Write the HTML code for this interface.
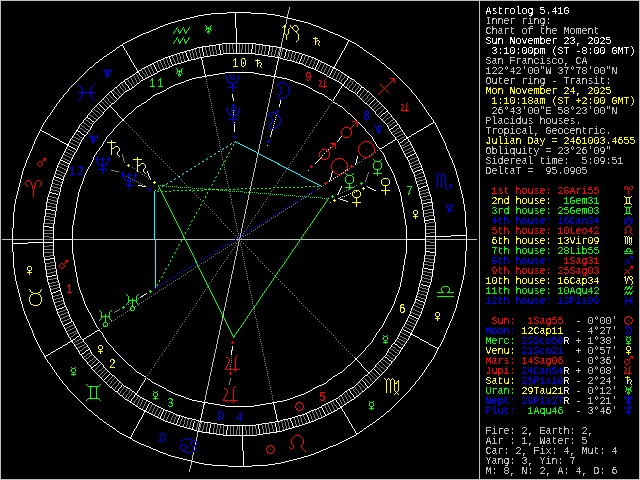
<!DOCTYPE html>
<html><head><meta charset="utf-8"><title>Astrolog 5.41G</title><style>
html,body{margin:0;padding:0;background:#000;}
body{width:640px;height:480px;position:relative;overflow:hidden;}
svg{position:absolute;left:0;top:0;}
.t{position:absolute;left:0;top:0;width:640px;height:480px;filter:url(#crisp);}
.l,.h{position:absolute;white-space:pre;font-family:"Liberation Mono",monospace;font-size:10px;line-height:10px;height:10px;}
.h{font-size:13.333px;line-height:13px;height:13px;letter-spacing:1.6px;transform:scaleX(0.8333);transform-origin:0 0;}
.l{left:485.5px;}
</style></head>
<body>
<svg width="640" height="480" viewBox="0 0 640 480" shape-rendering="crispEdges">
<rect width="640" height="480" fill="#000"/>
<path fill="#c0c0c0" d="M0 0h640v1h-640zM0 479h640v1h-640zM0 1h1v478h-1zM479 1h1v478h-1zM639 1h1v478h-1zM289 7h1v3h-1zM288 10h1v4h-1zM287 14h1v3h-1zM287 18h1v1h-1zM286 19h1v5h-1zM285 24h1v4h-1zM283 33h1v5h-1zM282 38h1v4h-1zM281 42h1v5h-1zM280 48h1v4h-1zM279 52h1v4h-1zM278 56h1v1h-1zM275 74h1v1h-1zM274 77h1v2h-1zM273 79h1v5h-1zM272 84h1v5h-1zM271 89h1v4h-1zM270 93h1v5h-1zM269 98h1v5h-1zM268 103h1v4h-1zM267 107h1v5h-1zM266 112h1v5h-1zM265 117h1v4h-1zM264 121h1v5h-1zM263 126h1v4h-1zM262 130h1v5h-1zM261 135h1v5h-1zM260 140h1v4h-1zM259 144h1v5h-1zM258 149h1v4h-1zM257 154h1v4h-1zM256 158h1v5h-1zM255 163h1v5h-1zM254 168h1v4h-1zM253 172h1v5h-1zM252 177h1v4h-1zM251 181h1v5h-1zM250 186h1v2h-1zM250 189h1v2h-1zM249 191h1v4h-1zM248 195h1v5h-1zM247 200h1v5h-1zM246 205h1v4h-1zM245 209h1v5h-1zM244 214h1v5h-1zM243 219h1v4h-1zM242 223h1v5h-1zM241 228h1v5h-1zM240 233h1v4h-1zM239 238h1v1h-1zM239 240h1v1h-1zM2 239h10v1h-10zM13 239h30v1h-30zM73 239h81v1h-81zM155 239h30v1h-30zM186 239h49v1h-49zM236 239h3v1h-3zM240 239h60v1h-60zM301 239h105v1h-105zM436 239h30v1h-30zM467 239h10v1h-10zM238 242h1v4h-1zM237 246h1v5h-1zM236 251h1v5h-1zM235 256h1v4h-1zM234 260h1v5h-1zM233 265h1v5h-1zM232 270h1v4h-1zM231 274h1v5h-1zM230 279h1v5h-1zM229 284h1v4h-1zM228 288h1v5h-1zM227 293h1v4h-1zM226 297h1v5h-1zM225 302h1v5h-1zM224 307h1v4h-1zM223 311h1v5h-1zM222 316h1v5h-1zM221 321h1v4h-1zM220 325h1v5h-1zM219 330h1v5h-1zM218 335h1v4h-1zM217 339h1v5h-1zM216 344h1v5h-1zM215 349h1v4h-1zM214 353h1v5h-1zM213 358h1v4h-1zM212 362h1v5h-1zM211 367h1v5h-1zM210 372h1v4h-1zM209 376h1v5h-1zM208 381h1v5h-1zM207 386h1v4h-1zM206 390h1v5h-1zM205 395h1v5h-1zM204 400h1v2h-1zM203 404h1v1h-1zM201 413h1v1h-1zM200 422h1v1h-1zM199 423h1v4h-1zM198 427h1v4h-1zM197 432h1v5h-1zM196 437h1v4h-1zM195 442h1v3h-1zM194 447h1v3h-1zM193 452h1v3h-1zM192 455h1v5h-1zM191 460h1v1h-1zM191 462h1v3h-1zM190 465h1v4h-1zM189 469h1v3h-1z"/><path fill="#ffffff" d="M227 12h24v1h-24zM211 13h16v1h-16zM235 13h1v15h-1zM251 13h16v1h-16zM204 14h7v1h-7zM204 422h7v1h-7zM267 14h8v1h-8zM198 15h6v1h-6zM275 15h5v1h-5zM275 57h5v1h-5zM275 421h5v1h-5zM194 16h4v1h-4zM280 16h4v1h-4zM190 17h4v1h-4zM284 17h4v1h-4zM186 18h4v1h-4zM288 18h4v1h-4zM288 50h4v1h-4zM288 418h4v1h-4zM288 428h4v1h-4zM182 19h4v1h-4zM292 19h4v1h-4zM178 20h4v1h-4zM296 20h4v1h-4zM175 21h3v1h-3zM175 84h3v1h-3zM175 394h3v1h-3zM300 21h4v1h-4zM171 22h4v1h-4zM171 456h4v1h-4zM304 22h4v1h-4zM304 456h4v1h-4zM168 23h3v1h-3zM168 56h3v1h-3zM168 411h3v1h-3zM168 422h3v1h-3zM168 455h3v1h-3zM308 23h3v1h-3zM308 56h3v1h-3zM308 67h3v1h-3zM308 422h3v1h-3zM308 455h3v1h-3zM165 24h3v1h-3zM165 57h3v1h-3zM165 68h3v1h-3zM165 410h3v1h-3zM165 421h3v1h-3zM311 24h2v1h-2zM163 25h2v1h-2zM163 58h2v1h-2zM163 409h2v1h-2zM163 420h2v1h-2zM313 25h3v1h-3zM160 26h3v1h-3zM160 452h3v1h-3zM316 26h3v1h-3zM316 452h3v1h-3zM158 27h2v1h-2zM158 385h2v1h-2zM158 451h2v1h-2zM319 27h2v1h-2zM319 451h2v1h-2zM156 28h2v1h-2zM156 61h2v1h-2zM156 384h2v1h-2zM156 450h2v1h-2zM236 28h1v15h-1zM236 44h1v9h-1zM321 28h2v1h-2zM321 417h2v1h-2zM321 450h2v1h-2zM153 29h3v1h-3zM153 449h3v1h-3zM323 29h3v1h-3zM323 449h3v1h-3zM151 30h2v1h-2zM151 75h2v1h-2zM151 414h2v1h-2zM151 448h2v1h-2zM326 30h2v1h-2zM326 64h2v1h-2zM326 403h2v1h-2zM326 448h2v1h-2zM149 31h2v1h-2zM149 76h2v1h-2zM149 413h2v1h-2zM149 447h2v1h-2zM328 31h2v1h-2zM328 65h2v1h-2zM328 402h2v1h-2zM328 447h2v1h-2zM146 32h3v1h-3zM146 446h3v1h-3zM330 32h3v1h-3zM330 446h3v1h-3zM143 33h3v1h-3zM143 410h3v1h-3zM333 33h2v1h-2zM333 79h2v1h-2zM333 102h2v1h-2zM333 376h2v1h-2zM333 411h2v1h-2zM141 34h2v1h-2zM141 80h2v1h-2zM141 296h2v1h-2zM141 409h2v1h-2zM335 34h3v1h-3zM139 35h2v1h-2zM139 70h2v1h-2zM139 105h2v1h-2zM139 373h2v1h-2zM139 408h2v1h-2zM139 443h2v1h-2zM338 35h2v1h-2zM338 70h2v1h-2zM338 105h2v1h-2zM338 198h2v1h-2zM338 373h2v1h-2zM338 408h2v1h-2zM338 443h2v1h-2zM137 36h2v1h-2zM137 71h2v1h-2zM137 83h2v1h-2zM137 106h2v1h-2zM137 372h2v1h-2zM137 395h2v1h-2zM137 442h2v1h-2zM340 36h2v1h-2zM340 83h2v1h-2zM340 106h2v1h-2zM340 372h2v1h-2zM340 395h2v1h-2zM340 407h2v1h-2zM340 442h2v1h-2zM135 37h2v1h-2zM135 393h2v2h-2zM135 441h2v1h-2zM342 37h2v1h-2zM342 84h2v2h-2zM342 441h2v1h-2zM133 38h2v1h-2zM133 74h2v1h-2zM133 404h2v1h-2zM133 440h2v1h-2zM344 38h2v1h-2zM344 74h2v1h-2zM344 404h2v1h-2zM344 440h2v1h-2zM131 39h2v1h-2zM346 39h2v1h-2zM346 201h2v1h-2zM346 439h2v1h-2zM129 40h2v1h-2zM129 89h2v1h-2zM129 113h2v1h-2zM129 365h2v1h-2zM129 401h2v1h-2zM348 40h2v1h-2zM348 77h2v1h-2zM348 113h2v1h-2zM348 365h2v1h-2zM348 389h2v1h-2zM348 438h2v1h-2zM127 41h2v1h-2zM127 78h2v1h-2zM127 90h2v1h-2zM127 400h2v1h-2zM348 41h1v1h-1zM348 89h1v1h-1zM348 194h1v1h-1zM348 419h1v2h-1zM350 41h2v1h-2zM350 78h2v1h-2zM350 388h2v1h-2zM350 400h2v1h-2zM350 437h2v1h-2zM125 42h2v1h-2zM125 79h2v1h-2zM125 91h2v1h-2zM125 399h2v1h-2zM347 42h1v2h-1zM347 78h1v2h-1zM347 88h1v1h-1zM347 112h1v1h-1zM347 169h1v1h-1zM347 366h1v1h-1zM347 390h1v1h-1zM347 417h1v2h-1zM352 42h2v1h-2zM352 79h2v1h-2zM352 387h2v1h-2zM352 399h2v1h-2zM352 436h2v1h-2zM123 43h2v1h-2zM123 81h2v1h-2zM222 43h34v1h-34zM354 43h2v1h-2zM354 397h2v1h-2zM354 435h2v1h-2zM122 44h1v1h-1zM122 94h1v1h-1zM122 358h1v1h-1zM122 384h1v1h-1zM122 396h1v1h-1zM216 44h6v1h-6zM252 44h1v5h-1zM256 44h7v1h-7zM346 44h1v2h-1zM346 75h1v1h-1zM346 80h1v1h-1zM346 111h1v1h-1zM346 195h1v1h-1zM346 367h1v1h-1zM346 403h1v1h-1zM346 416h1v1h-1zM356 44h1v1h-1zM356 82h1v1h-1zM356 94h1v1h-1zM356 120h1v1h-1zM356 159h1v4h-1zM356 191h1v1h-1zM356 384h1v1h-1zM356 434h1v1h-1zM120 45h3v1h-3zM209 45h7v1h-7zM209 433h7v1h-7zM219 45h1v5h-1zM263 45h7v1h-7zM263 433h7v1h-7zM357 45h2v1h-2zM357 83h2v1h-2zM119 46h1v1h-1zM119 84h1v1h-1zM119 97h1v1h-1zM119 116h1v1h-1zM119 123h1v1h-1zM119 355h1v1h-1zM119 381h1v1h-1zM119 388h1v1h-1zM119 394h1v1h-1zM119 432h1v1h-1zM123 46h1v2h-1zM123 93h1v1h-1zM123 359h1v1h-1zM123 385h1v1h-1zM123 397h1v1h-1zM202 46h7v1h-7zM269 46h8v1h-8zM345 46h1v2h-1zM345 81h1v1h-1zM345 110h1v1h-1zM345 170h1v1h-1zM345 368h1v1h-1zM345 414h1v2h-1zM359 46h1v1h-1zM359 84h1v1h-1zM359 90h1v1h-1zM359 97h1v1h-1zM359 123h1v1h-1zM359 355h1v1h-1zM359 362h1v1h-1zM359 381h1v1h-1zM359 394h1v1h-1zM359 432h1v1h-1zM117 47h2v1h-2zM117 431h2v1h-2zM197 47h6v1h-6zM269 47h1v4h-1zM277 47h5v1h-5zM277 77h5v1h-5zM360 47h2v1h-2zM360 431h2v1h-2zM116 48h1v1h-1zM116 98h1v1h-1zM116 100h1v1h-1zM116 112h1v1h-1zM116 126h1v1h-1zM116 352h1v1h-1zM116 378h1v1h-1zM116 430h1v1h-1zM124 48h1v2h-1zM124 80h1v1h-1zM124 92h1v1h-1zM124 118h1v1h-1zM124 360h1v1h-1zM124 398h1v1h-1zM194 48h3v1h-3zM194 430h3v1h-3zM202 48h1v4h-1zM202 60h1v5h-1zM202 409h1v5h-1zM282 48h3v1h-3zM282 430h3v1h-3zM344 48h1v2h-1zM344 82h1v2h-1zM344 86h1v1h-1zM344 109h1v1h-1zM344 196h1v1h-1zM344 369h1v1h-1zM344 392h1v1h-1zM344 412h1v2h-1zM362 48h1v1h-1zM362 100h1v1h-1zM362 126h1v1h-1zM362 352h1v1h-1zM362 366h1v1h-1zM362 378h1v1h-1zM362 380h1v1h-1zM362 430h1v1h-1zM115 49h1v1h-1zM115 97h1v1h-1zM115 101h1v1h-1zM115 111h1v1h-1zM115 127h1v1h-1zM115 351h1v1h-1zM115 377h1v1h-1zM115 429h1v1h-1zM191 49h3v1h-3zM191 429h3v1h-3zM251 49h1v4h-1zM285 49h3v1h-3zM285 429h3v1h-3zM363 49h1v1h-1zM363 101h1v1h-1zM363 127h1v1h-1zM363 351h1v1h-1zM363 367h1v1h-1zM363 377h1v1h-1zM363 381h1v1h-1zM363 429h1v1h-1zM113 50h2v1h-2zM113 428h2v1h-2zM125 50h1v1h-1zM125 82h1v2h-1zM125 117h1v1h-1zM125 361h1v1h-1zM187 50h4v1h-4zM187 60h4v1h-4zM187 428h4v1h-4zM187 460h4v1h-4zM220 50h1v4h-1zM286 50h1v2h-1zM343 50h1v1h-1zM343 73h1v1h-1zM343 108h1v1h-1zM343 172h1v1h-1zM343 370h1v1h-1zM343 393h1v1h-1zM343 405h1v1h-1zM343 411h1v1h-1zM364 50h2v1h-2zM364 428h2v1h-2zM112 51h1v1h-1zM112 90h1v1h-1zM112 93h1v1h-1zM112 108h1v1h-1zM112 131h1v1h-1zM112 347h1v1h-1zM112 388h1v1h-1zM112 427h1v1h-1zM126 51h1v2h-1zM126 84h1v1h-1zM126 116h1v1h-1zM126 362h1v1h-1zM184 51h3v1h-3zM184 61h3v1h-3zM184 417h3v1h-3zM184 427h3v1h-3zM268 51h1v4h-1zM292 51h3v1h-3zM292 61h3v1h-3zM292 417h3v1h-3zM292 427h3v1h-3zM342 51h1v2h-1zM342 107h1v1h-1zM342 196h1v1h-1zM342 371h1v1h-1zM342 394h1v1h-1zM342 409h1v2h-1zM366 51h1v1h-1zM366 90h1v1h-1zM366 131h1v1h-1zM366 347h1v1h-1zM366 370h1v1h-1zM366 385h1v1h-1zM366 388h1v1h-1zM366 427h1v1h-1zM110 52h2v1h-2zM110 91h2v1h-2zM110 387h2v1h-2zM110 426h2v1h-2zM180 52h4v1h-4zM180 426h4v1h-4zM185 52h1v1h-1zM203 52h1v4h-1zM203 65h1v4h-1zM203 405h1v4h-1zM285 52h1v4h-1zM295 52h4v1h-4zM295 426h4v1h-4zM367 52h2v1h-2zM367 91h2v1h-2zM367 387h2v1h-2zM367 426h2v1h-2zM109 53h1v1h-1zM109 92h1v1h-1zM109 134h1v1h-1zM109 344h1v1h-1zM109 372h1v1h-1zM109 374h1v1h-1zM109 386h1v1h-1zM109 425h1v1h-1zM127 53h1v2h-1zM127 85h1v1h-1zM127 115h1v1h-1zM127 363h1v1h-1zM177 53h3v1h-3zM177 425h3v1h-3zM186 53h1v3h-1zM223 53h32v1h-32zM299 53h3v1h-3zM299 425h3v1h-3zM341 53h1v2h-1zM341 86h1v2h-1zM341 136h1v1h-1zM341 173h1v1h-1zM341 186h1v2h-1zM341 408h1v1h-1zM369 53h1v1h-1zM369 92h1v1h-1zM369 104h1v1h-1zM369 106h1v1h-1zM369 134h1v1h-1zM369 344h1v1h-1zM369 386h1v1h-1zM369 425h1v1h-1zM107 54h2v1h-2zM107 424h2v1h-2zM174 54h3v1h-3zM174 64h3v1h-3zM174 424h3v1h-3zM217 54h6v1h-6zM255 54h7v1h-7zM302 54h3v1h-3zM302 414h3v1h-3zM302 424h3v1h-3zM370 54h2v1h-2zM370 188h2v1h-2zM370 424h2v1h-2zM106 55h1v1h-1zM106 95h1v1h-1zM106 109h1v1h-1zM106 137h1v2h-1zM106 340h1v2h-1zM106 369h1v1h-1zM106 377h1v1h-1zM106 383h1v1h-1zM106 423h1v1h-1zM128 55h1v1h-1zM128 86h1v2h-1zM128 114h1v1h-1zM128 364h1v1h-1zM171 55h3v1h-3zM171 423h3v1h-3zM210 55h7v1h-7zM262 55h6v1h-6zM302 55h1v1h-1zM305 55h3v1h-3zM305 423h3v1h-3zM340 55h1v2h-1zM340 71h1v1h-1zM340 88h1v1h-1zM340 137h1v1h-1zM340 188h1v2h-1zM340 197h1v1h-1zM372 55h1v1h-1zM372 95h1v1h-1zM372 101h1v1h-1zM372 109h1v1h-1zM372 137h1v2h-1zM372 340h1v2h-1zM372 369h1v1h-1zM372 383h1v1h-1zM372 423h1v1h-1zM104 56h2v1h-2zM104 422h2v1h-2zM129 56h1v2h-1zM129 77h1v1h-1zM129 88h1v1h-1zM187 56h1v2h-1zM204 56h6v1h-6zM268 56h7v1h-7zM268 464h7v1h-7zM284 56h1v2h-1zM301 56h1v3h-1zM373 56h2v1h-2zM373 422h2v1h-2zM103 57h1v1h-1zM103 98h1v1h-1zM103 108h1v1h-1zM103 112h1v2h-1zM103 142h1v2h-1zM103 335h1v2h-1zM103 365h1v2h-1zM103 380h1v1h-1zM103 421h1v1h-1zM169 57h1v2h-1zM199 57h5v1h-5zM199 421h5v1h-5zM199 463h5v1h-5zM311 57h3v1h-3zM311 68h3v1h-3zM311 410h3v1h-3zM311 421h3v1h-3zM311 454h3v1h-3zM339 57h1v2h-1zM339 82h1v1h-1zM339 89h1v2h-1zM339 138h1v2h-1zM339 190h1v2h-1zM339 396h1v1h-1zM339 404h1v2h-1zM375 57h1v1h-1zM375 98h1v1h-1zM375 112h1v2h-1zM375 142h1v2h-1zM375 335h1v2h-1zM375 365h1v2h-1zM375 370h1v1h-1zM375 380h1v1h-1zM375 421h1v1h-1zM102 58h1v1h-1zM102 99h1v1h-1zM102 107h1v1h-1zM102 114h1v1h-1zM102 144h1v2h-1zM102 333h1v2h-1zM102 364h1v1h-1zM102 379h1v1h-1zM102 420h1v1h-1zM130 58h1v2h-1zM130 389h1v1h-1zM188 58h1v2h-1zM196 58h3v1h-3zM196 420h3v1h-3zM201 58h1v2h-1zM201 414h1v4h-1zM278 58h1v3h-1zM280 58h3v1h-3zM280 420h3v1h-3zM314 58h2v1h-2zM314 69h2v1h-2zM314 420h2v1h-2zM314 453h2v1h-2zM376 58h1v1h-1zM376 99h1v1h-1zM376 114h1v1h-1zM376 144h1v2h-1zM376 333h1v2h-1zM376 364h1v1h-1zM376 371h1v1h-1zM376 379h1v1h-1zM376 420h1v1h-1zM100 59h2v1h-2zM100 419h2v1h-2zM161 59h2v1h-2zM161 408h2v1h-2zM161 419h2v1h-2zM170 59h1v3h-1zM191 59h5v1h-5zM283 59h4v1h-4zM283 400h4v1h-4zM300 59h1v2h-1zM316 59h2v1h-2zM316 70h2v1h-2zM316 419h2v1h-2zM338 59h1v1h-1zM338 91h1v2h-1zM338 140h1v1h-1zM338 192h1v2h-1zM338 397h1v1h-1zM338 403h1v1h-1zM377 59h2v1h-2zM377 419h2v1h-2zM99 60h1v1h-1zM99 102h1v1h-1zM99 104h1v1h-1zM99 117h1v1h-1zM99 148h1v2h-1zM99 361h1v1h-1zM99 376h1v1h-1zM99 418h1v1h-1zM131 60h1v2h-1zM131 88h1v1h-1zM131 112h1v1h-1zM131 366h1v1h-1zM131 390h1v1h-1zM131 399h1v2h-1zM131 435h1v2h-1zM158 60h3v1h-3zM287 60h5v1h-5zM318 60h2v1h-2zM318 71h2v1h-2zM337 60h1v2h-1zM337 93h1v1h-1zM337 104h1v1h-1zM337 141h1v1h-1zM337 176h1v1h-1zM337 194h1v1h-1zM337 374h1v1h-1zM337 402h1v1h-1zM337 409h1v1h-1zM379 60h1v1h-1zM379 102h1v1h-1zM379 117h1v1h-1zM379 329h1v2h-1zM379 361h1v1h-1zM379 374h1v1h-1zM379 376h1v1h-1zM379 418h1v1h-1zM98 61h1v1h-1zM98 103h1v1h-1zM98 118h1v1h-1zM98 150h1v1h-1zM98 328h1v1h-1zM98 360h1v1h-1zM98 362h1v1h-1zM98 375h1v1h-1zM98 417h1v1h-1zM277 61h1v4h-1zM277 419h1v2h-1zM299 61h1v2h-1zM318 61h1v2h-1zM318 160h1v1h-1zM320 61h2v1h-2zM320 72h2v1h-2zM380 61h1v1h-1zM380 103h1v1h-1zM380 116h1v1h-1zM380 118h1v1h-1zM380 150h1v1h-1zM380 328h1v1h-1zM380 360h1v1h-1zM380 375h1v1h-1zM380 417h1v1h-1zM96 62h2v1h-2zM132 62h1v1h-1zM132 75h1v1h-1zM132 111h1v1h-1zM132 367h1v1h-1zM132 398h1v1h-1zM132 403h1v1h-1zM132 433h1v2h-1zM132 439h1v1h-1zM154 62h2v1h-2zM154 383h2v1h-2zM171 62h1v2h-1zM181 62h3v1h-3zM181 82h3v1h-3zM181 396h3v1h-3zM181 416h3v1h-3zM295 62h3v1h-3zM295 82h3v1h-3zM295 396h3v1h-3zM295 416h3v1h-3zM322 62h2v1h-2zM322 73h2v1h-2zM322 94h2v1h-2zM322 384h2v1h-2zM322 405h2v1h-2zM336 62h1v2h-1zM336 94h1v2h-1zM336 400h1v2h-1zM381 62h1v1h-1zM381 104h1v1h-1zM381 115h1v1h-1zM381 119h1v1h-1zM381 151h1v1h-1zM381 327h1v1h-1zM381 359h1v1h-1zM381 374h1v1h-1zM95 63h1v1h-1zM95 106h1v1h-1zM95 121h1v1h-1zM95 154h1v1h-1zM95 323h1v2h-1zM95 357h1v1h-1zM95 372h1v1h-1zM133 63h1v2h-1zM133 110h1v1h-1zM133 368h1v1h-1zM133 397h1v1h-1zM133 431h1v2h-1zM152 63h2v1h-2zM152 382h2v1h-2zM177 63h4v1h-4zM177 415h4v1h-4zM298 63h4v1h-4zM298 415h4v1h-4zM317 63h1v2h-1zM317 161h1v1h-1zM324 63h2v1h-2zM324 74h2v1h-2zM324 383h2v1h-2zM324 404h2v1h-2zM382 63h2v1h-2zM382 147h2v1h-2zM94 64h1v1h-1zM94 107h1v1h-1zM94 122h1v1h-1zM94 155h1v2h-1zM94 321h1v2h-1zM94 332h1v1h-1zM94 356h1v1h-1zM94 371h1v1h-1zM94 414h1v1h-1zM150 64h2v1h-2zM150 402h2v1h-2zM153 64h1v1h-1zM172 64h1v1h-1zM302 64h2v1h-2zM335 64h1v2h-1zM335 96h1v1h-1zM335 177h1v1h-1zM384 64h1v1h-1zM384 107h1v1h-1zM384 122h1v1h-1zM384 146h1v1h-1zM384 155h1v2h-1zM384 321h1v2h-1zM384 356h1v1h-1zM384 371h1v1h-1zM384 414h1v1h-1zM93 65h1v1h-1zM93 108h1v1h-1zM93 123h1v1h-1zM93 157h1v3h-1zM93 319h1v2h-1zM93 355h1v1h-1zM93 366h1v1h-1zM93 370h1v1h-1zM93 413h1v1h-1zM134 65h1v2h-1zM134 86h1v1h-1zM134 109h1v1h-1zM134 369h1v1h-1zM134 392h1v1h-1zM134 395h1v2h-1zM134 429h1v2h-1zM148 65h2v1h-2zM148 99h2v1h-2zM148 379h2v1h-2zM148 401h2v1h-2zM154 65h1v2h-1zM172 65h2v1h-2zM276 65h1v5h-1zM276 115h1v1h-1zM276 414h1v5h-1zM276 427h1v4h-1zM304 65h2v1h-2zM304 85h2v1h-2zM304 393h2v1h-2zM316 65h1v2h-1zM316 162h1v1h-1zM385 65h1v1h-1zM385 108h1v1h-1zM385 112h1v1h-1zM385 123h1v1h-1zM385 157h1v3h-1zM385 319h1v2h-1zM385 355h1v1h-1zM385 370h1v1h-1zM385 413h1v1h-1zM92 66h1v1h-1zM92 109h1v1h-1zM92 124h1v2h-1zM92 160h1v2h-1zM92 317h1v2h-1zM92 354h1v1h-1zM92 369h1v1h-1zM92 412h1v1h-1zM146 66h2v1h-2zM146 400h2v1h-2zM170 66h2v1h-2zM306 66h2v1h-2zM306 86h2v1h-2zM306 392h2v1h-2zM330 66h2v1h-2zM330 401h2v1h-2zM334 66h1v1h-1zM334 97h1v2h-1zM386 66h1v1h-1zM386 109h1v1h-1zM386 124h1v1h-1zM386 160h1v2h-1zM386 317h1v2h-1zM386 353h1v2h-1zM386 369h1v1h-1zM386 412h1v1h-1zM90 67h2v1h-2zM135 67h1v1h-1zM135 73h1v1h-1zM135 85h1v1h-1zM135 108h1v1h-1zM135 370h1v1h-1zM135 405h1v1h-1zM135 428h1v1h-1zM144 67h2v1h-2zM144 102h2v1h-2zM144 294h2v1h-2zM144 376h2v1h-2zM144 399h2v1h-2zM144 445h2v1h-2zM155 67h1v2h-1zM168 67h2v1h-2zM315 67h1v2h-1zM315 163h1v1h-1zM332 67h3v1h-3zM387 67h1v1h-1zM387 110h1v1h-1zM387 125h1v2h-1zM387 144h1v1h-1zM387 162h1v2h-1zM387 315h1v2h-1zM387 351h1v2h-1zM387 358h1v1h-1zM387 367h1v2h-1zM89 68h1v1h-1zM89 113h1v1h-1zM89 130h1v1h-1zM89 166h1v1h-1zM89 312h1v1h-1zM89 348h1v1h-1zM89 365h1v1h-1zM136 68h1v2h-1zM136 84h1v1h-1zM136 107h1v1h-1zM136 371h1v1h-1zM136 426h1v2h-1zM142 68h2v1h-2zM142 103h2v1h-2zM142 375h2v1h-2zM142 398h2v1h-2zM333 68h3v1h-3zM333 445h3v1h-3zM388 68h2v1h-2zM388 143h2v1h-2zM88 69h1v1h-1zM88 114h1v1h-1zM88 131h1v1h-1zM88 167h1v2h-1zM88 310h1v2h-1zM88 347h1v1h-1zM88 364h1v1h-1zM88 409h1v1h-1zM141 69h1v1h-1zM141 76h1v1h-1zM141 104h1v1h-1zM141 374h1v1h-1zM141 385h1v1h-1zM141 417h1v2h-1zM156 69h1v2h-1zM162 69h3v1h-3zM204 69h1v5h-1zM204 403h1v2h-1zM332 69h1v2h-1zM332 171h1v2h-1zM332 377h1v1h-1zM336 69h2v1h-2zM336 398h2v1h-2zM336 444h2v1h-2zM390 69h1v1h-1zM390 114h1v1h-1zM390 131h1v1h-1zM390 167h1v2h-1zM390 310h1v2h-1zM390 347h1v1h-1zM390 364h1v1h-1zM390 409h1v1h-1zM87 70h1v1h-1zM87 115h1v2h-1zM87 132h1v2h-1zM87 169h1v2h-1zM87 308h1v2h-1zM87 345h1v2h-1zM87 362h1v2h-1zM87 408h1v1h-1zM137 70h1v1h-1zM137 391h1v2h-1zM137 424h1v2h-1zM160 70h2v1h-2zM160 92h2v1h-2zM160 386h2v1h-2zM275 70h1v4h-1zM275 117h1v1h-1zM275 119h1v1h-1zM275 410h1v4h-1zM275 423h1v4h-1zM391 70h1v1h-1zM391 115h1v2h-1zM391 132h1v2h-1zM391 169h1v2h-1zM391 308h1v2h-1zM391 345h1v2h-1zM391 362h1v2h-1zM391 408h1v1h-1zM86 71h1v1h-1zM86 134h1v1h-1zM86 171h1v2h-1zM86 306h1v2h-1zM86 337h1v1h-1zM86 344h1v1h-1zM86 361h1v1h-1zM86 407h1v1h-1zM157 71h3v1h-3zM157 93h3v1h-3zM331 71h1v2h-1zM331 100h1v1h-1zM331 173h1v4h-1zM331 180h1v1h-1zM331 378h1v1h-1zM392 71h1v1h-1zM392 117h1v1h-1zM392 134h1v1h-1zM392 141h1v1h-1zM392 171h1v2h-1zM392 306h1v2h-1zM392 344h1v1h-1zM392 407h1v1h-1zM85 72h1v1h-1zM85 118h1v1h-1zM85 173h1v2h-1zM85 304h1v2h-1zM85 343h1v1h-1zM85 351h1v1h-1zM85 360h1v1h-1zM85 406h1v1h-1zM136 72h3v1h-3zM157 72h1v1h-1zM225 72h29v1h-29zM225 406h29v1h-29zM341 72h2v1h-2zM393 72h1v1h-1zM393 118h1v1h-1zM393 127h1v1h-1zM393 135h1v1h-1zM393 173h1v2h-1zM393 304h1v2h-1zM393 360h1v1h-1zM393 406h1v1h-1zM84 73h1v1h-1zM84 119h1v1h-1zM84 136h1v1h-1zM84 175h1v3h-1zM84 301h1v3h-1zM84 342h1v1h-1zM84 352h1v1h-1zM84 359h1v1h-1zM84 405h1v1h-1zM139 73h1v2h-1zM139 82h1v1h-1zM139 388h1v2h-1zM139 396h1v1h-1zM139 420h1v2h-1zM155 73h2v1h-2zM155 94h2v1h-2zM155 405h2v1h-2zM155 416h2v1h-2zM219 73h6v1h-6zM254 73h5v1h-5zM330 73h1v2h-1zM330 147h1v1h-1zM330 177h1v3h-1zM394 73h1v1h-1zM394 119h1v1h-1zM394 126h1v1h-1zM394 136h1v1h-1zM394 175h1v3h-1zM394 301h1v3h-1zM394 342h1v1h-1zM394 359h1v1h-1zM394 405h1v1h-1zM83 74h1v1h-1zM83 120h1v2h-1zM83 137h1v2h-1zM83 178h1v3h-1zM83 298h1v3h-1zM83 340h1v2h-1zM83 358h1v1h-1zM83 404h1v1h-1zM153 74h2v1h-2zM153 95h2v1h-2zM153 404h2v1h-2zM153 415h2v1h-2zM205 74h1v2h-1zM213 74h6v1h-6zM259 74h6v1h-6zM274 74h1v2h-1zM274 121h1v1h-1zM274 123h1v1h-1zM274 405h1v5h-1zM395 74h1v1h-1zM395 120h1v1h-1zM395 137h1v2h-1zM395 178h1v3h-1zM395 298h1v3h-1zM395 340h1v2h-1zM395 357h1v2h-1zM395 404h1v1h-1zM82 75h1v1h-1zM82 122h1v1h-1zM82 139h1v1h-1zM82 181h1v3h-1zM82 295h1v3h-1zM82 356h1v2h-1zM82 403h1v1h-1zM140 75h1v1h-1zM140 81h1v1h-1zM140 297h1v1h-1zM140 386h1v2h-1zM140 419h1v1h-1zM207 75h6v1h-6zM265 75h6v1h-6zM326 75h1v1h-1zM326 151h1v1h-1zM326 382h1v1h-1zM329 75h1v1h-1zM329 180h1v2h-1zM396 75h1v1h-1zM396 121h1v2h-1zM396 181h1v3h-1zM396 295h1v3h-1zM396 339h1v1h-1zM396 356h1v1h-1zM396 403h1v1h-1zM81 76h1v1h-1zM81 123h1v1h-1zM81 133h1v1h-1zM81 140h1v2h-1zM81 184h1v2h-1zM81 293h1v2h-1zM81 338h1v1h-1zM81 355h1v1h-1zM81 402h1v1h-1zM130 76h2v1h-2zM130 402h2v1h-2zM130 438h2v1h-2zM202 76h5v1h-5zM271 76h6v1h-6zM327 76h2v1h-2zM327 414h2v1h-2zM347 76h2v1h-2zM347 402h2v1h-2zM397 76h1v1h-1zM397 123h1v1h-1zM397 140h1v1h-1zM397 184h1v2h-1zM397 293h1v2h-1zM397 337h1v2h-1zM397 345h1v1h-1zM397 355h1v1h-1zM397 402h1v1h-1zM80 77h1v1h-1zM80 124h1v1h-1zM80 132h1v1h-1zM80 142h1v2h-1zM80 186h1v3h-1zM80 290h1v3h-1zM80 336h1v2h-1zM80 401h1v1h-1zM142 77h1v2h-1zM142 383h1v2h-1zM142 415h1v2h-1zM147 77h2v1h-2zM147 412h2v1h-2zM196 77h6v1h-6zM329 77h2v1h-2zM329 99h2v1h-2zM329 379h2v1h-2zM329 413h2v1h-2zM398 77h1v1h-1zM398 141h1v2h-1zM398 186h1v3h-1zM398 290h1v3h-1zM398 335h1v2h-1zM398 346h1v1h-1zM398 354h1v1h-1zM398 401h1v1h-1zM79 78h1v1h-1zM79 125h1v2h-1zM79 144h1v2h-1zM79 189h1v3h-1zM79 287h1v3h-1zM79 334h1v2h-1zM79 352h1v2h-1zM79 400h1v1h-1zM145 78h2v1h-2zM192 78h4v1h-4zM192 419h4v1h-4zM282 78h5v1h-5zM331 78h2v1h-2zM331 412h2v1h-2zM399 78h1v1h-1zM399 125h1v2h-1zM399 143h1v2h-1zM399 189h1v3h-1zM399 287h1v3h-1zM399 333h1v2h-1zM399 352h1v2h-1zM399 400h1v1h-1zM78 79h1v1h-1zM78 127h1v2h-1zM78 146h1v2h-1zM78 192h1v5h-1zM78 283h1v4h-1zM78 332h1v2h-1zM78 350h1v2h-1zM78 399h1v1h-1zM143 79h2v1h-2zM189 79h3v1h-3zM189 399h3v1h-3zM287 79h3v1h-3zM287 399h3v1h-3zM400 79h1v1h-1zM400 127h1v2h-1zM400 145h1v2h-1zM400 192h1v4h-1zM400 282h1v5h-1zM400 331h1v2h-1zM400 350h1v2h-1zM400 399h1v1h-1zM77 80h1v1h-1zM77 129h1v1h-1zM77 148h1v2h-1zM77 197h1v5h-1zM77 277h1v6h-1zM77 330h1v2h-1zM77 349h1v1h-1zM77 398h1v1h-1zM186 80h3v1h-3zM186 398h3v1h-3zM290 80h3v1h-3zM290 398h3v1h-3zM335 80h2v1h-2zM335 103h2v1h-2zM335 375h2v1h-2zM335 410h2v1h-2zM354 80h1v1h-1zM354 118h1v1h-1zM354 192h1v1h-1zM354 360h1v1h-1zM354 386h1v1h-1zM354 398h1v1h-1zM354 429h1v2h-1zM401 80h1v1h-1zM401 129h1v1h-1zM401 147h1v2h-1zM401 196h1v6h-1zM401 277h1v5h-1zM401 329h1v2h-1zM401 349h1v1h-1zM401 398h1v1h-1zM76 81h1v1h-1zM76 131h1v1h-1zM76 150h1v2h-1zM76 202h1v6h-1zM76 272h1v5h-1zM76 328h1v2h-1zM76 337h1v1h-1zM76 347h1v2h-1zM76 397h1v1h-1zM184 81h2v1h-2zM184 397h2v1h-2zM293 81h2v1h-2zM293 397h2v1h-2zM337 81h2v1h-2zM355 81h1v1h-1zM355 93h1v1h-1zM355 119h1v1h-1zM355 163h1v2h-1zM355 385h1v1h-1zM355 431h1v2h-1zM402 81h1v1h-1zM402 130h1v2h-1zM402 141h1v1h-1zM402 149h1v2h-1zM402 202h1v5h-1zM402 271h1v6h-1zM402 327h1v2h-1zM402 347h1v1h-1zM402 397h1v1h-1zM75 82h1v1h-1zM75 132h1v1h-1zM75 149h1v1h-1zM75 152h1v1h-1zM75 208h1v6h-1zM75 266h1v6h-1zM75 326h1v2h-1zM75 338h1v1h-1zM75 346h1v1h-1zM75 396h1v1h-1zM121 82h2v1h-2zM403 82h1v1h-1zM403 132h1v1h-1zM403 140h1v1h-1zM403 151h1v2h-1zM403 207h1v6h-1zM403 265h1v6h-1zM403 326h1v1h-1zM403 329h1v1h-1zM403 346h1v1h-1zM403 396h1v1h-1zM74 83h1v1h-1zM74 133h1v2h-1zM74 153h1v2h-1zM74 214h1v6h-1zM74 260h1v6h-1zM74 324h1v2h-1zM74 344h1v2h-1zM74 395h1v1h-1zM120 83h1v1h-1zM120 96h1v1h-1zM120 117h1v1h-1zM120 122h1v1h-1zM120 356h1v1h-1zM120 382h1v1h-1zM120 387h1v1h-1zM178 83h3v1h-3zM178 395h3v1h-3zM298 83h3v1h-3zM298 395h3v1h-3zM404 83h1v1h-1zM404 133h1v2h-1zM404 153h1v2h-1zM404 213h1v6h-1zM404 259h1v6h-1zM404 324h1v2h-1zM404 344h1v2h-1zM404 395h1v1h-1zM73 84h1v1h-1zM73 135h1v1h-1zM73 155h1v2h-1zM73 220h1v5h-1zM73 254h1v6h-1zM73 322h1v2h-1zM73 343h1v1h-1zM73 394h1v1h-1zM301 84h3v1h-3zM301 394h3v1h-3zM301 457h3v1h-3zM405 84h1v1h-1zM405 135h1v1h-1zM405 155h1v2h-1zM405 219h1v6h-1zM405 254h1v5h-1zM405 322h1v2h-1zM405 343h1v1h-1zM405 394h1v1h-1zM72 85h1v1h-1zM72 136h1v2h-1zM72 157h1v2h-1zM72 225h1v14h-1zM72 240h1v14h-1zM72 342h1v1h-1zM72 393h1v1h-1zM118 85h1v1h-1zM118 98h1v1h-1zM118 115h1v1h-1zM118 124h1v1h-1zM118 354h1v1h-1zM118 380h1v1h-1zM118 389h1v2h-1zM118 393h1v1h-1zM173 85h2v1h-2zM173 393h2v1h-2zM173 413h2v1h-2zM360 85h1v1h-1zM360 88h1v2h-1zM360 98h1v1h-1zM360 124h1v1h-1zM360 354h1v1h-1zM360 363h1v1h-1zM360 380h1v1h-1zM360 393h1v1h-1zM406 85h1v1h-1zM406 136h1v1h-1zM406 225h1v14h-1zM406 240h1v14h-1zM406 320h1v2h-1zM406 341h1v2h-1zM406 393h1v1h-1zM71 86h1v1h-1zM71 138h1v1h-1zM71 159h1v2h-1zM71 319h1v2h-1zM71 392h1v1h-1zM117 86h1v1h-1zM117 99h1v1h-1zM117 113h1v2h-1zM117 125h1v1h-1zM117 353h1v1h-1zM117 379h1v1h-1zM117 392h1v1h-1zM171 86h2v1h-2zM171 392h2v1h-2zM171 412h2v1h-2zM361 86h1v1h-1zM361 99h1v1h-1zM361 125h1v1h-1zM361 353h1v1h-1zM361 364h1v2h-1zM361 379h1v1h-1zM361 392h1v1h-1zM407 86h1v1h-1zM407 158h1v2h-1zM407 318h1v2h-1zM407 340h1v1h-1zM407 392h1v1h-1zM70 87h1v1h-1zM70 139h1v2h-1zM70 161h1v2h-1zM70 317h1v2h-1zM70 338h1v2h-1zM70 391h1v1h-1zM115 87h2v1h-2zM132 87h2v1h-2zM132 391h2v1h-2zM169 87h2v1h-2zM169 391h2v1h-2zM308 87h2v1h-2zM308 391h2v1h-2zM345 87h2v1h-2zM345 391h2v1h-2zM361 87h3v1h-3zM408 87h1v1h-1zM408 139h1v2h-1zM408 160h1v2h-1zM408 316h1v2h-1zM408 338h1v2h-1zM408 391h1v1h-1zM69 88h1v1h-1zM69 141h1v2h-1zM69 164h1v1h-1zM69 314h1v3h-1zM69 337h1v1h-1zM69 390h1v1h-1zM114 88h1v1h-1zM114 96h1v1h-1zM114 102h1v1h-1zM114 110h1v1h-1zM114 128h1v1h-1zM114 350h1v1h-1zM114 376h1v1h-1zM114 390h1v1h-1zM167 88h2v1h-2zM167 390h2v1h-2zM310 88h2v1h-2zM310 390h2v1h-2zM364 88h1v1h-1zM364 102h1v1h-1zM364 128h1v1h-1zM364 350h1v1h-1zM364 368h1v1h-1zM364 376h1v1h-1zM364 382h1v1h-1zM364 390h1v1h-1zM409 88h1v1h-1zM409 141h1v1h-1zM409 162h1v3h-1zM409 314h1v1h-1zM409 336h1v2h-1zM409 390h1v1h-1zM68 89h1v2h-1zM68 143h1v1h-1zM68 165h1v3h-1zM68 311h1v3h-1zM68 335h1v2h-1zM68 389h1v1h-1zM113 89h1v1h-1zM113 94h1v2h-1zM113 109h1v1h-1zM113 129h1v2h-1zM113 348h1v2h-1zM113 389h1v1h-1zM166 89h1v1h-1zM166 389h1v1h-1zM312 89h1v1h-1zM312 389h1v1h-1zM365 89h1v1h-1zM365 129h1v2h-1zM365 348h1v2h-1zM365 369h1v1h-1zM365 383h1v2h-1zM365 389h1v1h-1zM410 89h1v1h-1zM410 142h1v2h-1zM410 165h1v3h-1zM410 311h1v3h-1zM410 335h1v1h-1zM410 388h1v2h-1zM164 90h2v1h-2zM164 388h2v1h-2zM313 90h2v1h-2zM313 388h2v1h-2zM349 90h2v1h-2zM411 90h1v2h-1zM411 135h1v1h-1zM411 144h1v2h-1zM411 168h1v2h-1zM411 308h1v3h-1zM411 332h1v1h-1zM411 387h1v1h-1zM67 91h1v1h-1zM67 146h1v1h-1zM67 168h1v3h-1zM67 309h1v2h-1zM67 333h1v2h-1zM67 343h1v1h-1zM67 387h1v2h-1zM162 91h2v1h-2zM162 387h2v1h-2zM315 91h2v1h-2zM315 387h2v1h-2zM351 91h2v1h-2zM358 91h1v1h-1zM358 96h1v1h-1zM358 122h1v1h-1zM358 356h1v1h-1zM358 361h1v1h-1zM358 382h1v1h-1zM358 395h1v1h-1zM66 92h1v1h-1zM66 147h1v2h-1zM66 171h1v2h-1zM66 307h1v2h-1zM66 331h1v2h-1zM66 386h1v1h-1zM111 92h1v1h-1zM111 104h1v1h-1zM111 107h1v1h-1zM111 132h1v1h-1zM111 346h1v1h-1zM111 374h1v1h-1zM317 92h2v1h-2zM317 386h2v1h-2zM317 408h2v1h-2zM353 92h2v1h-2zM357 92h1v2h-1zM357 95h1v1h-1zM357 156h1v3h-1zM357 357h1v1h-1zM357 360h1v1h-1zM357 383h1v1h-1zM412 92h1v1h-1zM412 146h1v2h-1zM412 170h1v2h-1zM412 306h1v2h-1zM412 330h1v2h-1zM412 386h1v1h-1zM65 93h1v1h-1zM65 149h1v2h-1zM65 173h1v2h-1zM65 305h1v1h-1zM65 329h1v2h-1zM65 385h1v1h-1zM108 93h1v1h-1zM108 107h1v1h-1zM108 135h1v1h-1zM108 343h1v1h-1zM108 371h1v1h-1zM108 375h1v1h-1zM108 385h1v1h-1zM319 93h3v1h-3zM319 385h3v1h-3zM319 407h3v1h-3zM370 93h1v1h-1zM370 103h1v1h-1zM370 107h1v1h-1zM370 135h1v1h-1zM370 343h1v1h-1zM370 371h1v1h-1zM370 385h1v1h-1zM413 93h1v1h-1zM413 148h1v2h-1zM413 173h1v1h-1zM413 304h1v2h-1zM413 328h1v2h-1zM413 385h1v1h-1zM64 94h1v1h-1zM64 151h1v2h-1zM64 175h1v2h-1zM64 302h1v3h-1zM64 327h1v2h-1zM64 384h1v1h-1zM107 94h1v1h-1zM107 108h1v1h-1zM107 136h1v1h-1zM107 342h1v1h-1zM107 370h1v1h-1zM107 376h1v1h-1zM107 384h1v1h-1zM232 94h1v4h-1zM232 346h1v4h-1zM371 94h1v1h-1zM371 102h1v1h-1zM371 108h1v1h-1zM371 136h1v1h-1zM371 342h1v1h-1zM371 370h1v1h-1zM371 384h1v1h-1zM414 94h1v1h-1zM414 150h1v2h-1zM414 174h1v3h-1zM414 302h1v2h-1zM414 326h1v2h-1zM414 384h1v1h-1zM63 95h1v2h-1zM63 153h1v2h-1zM63 177h1v2h-1zM63 180h1v1h-1zM63 298h1v4h-1zM63 326h1v1h-1zM63 383h1v1h-1zM121 95h1v1h-1zM121 118h1v1h-1zM121 121h1v1h-1zM121 357h1v1h-1zM121 383h1v1h-1zM121 385h1v2h-1zM324 95h1v1h-1zM324 153h1v1h-1zM324 412h1v2h-1zM415 95h1v1h-1zM415 152h1v1h-1zM415 177h1v4h-1zM415 298h1v1h-1zM415 300h1v2h-1zM415 324h1v2h-1zM415 382h1v2h-1zM105 96h1v1h-1zM105 110h1v1h-1zM105 139h1v2h-1zM105 338h1v2h-1zM105 368h1v1h-1zM105 378h1v1h-1zM105 382h1v1h-1zM152 96h1v1h-1zM152 403h1v1h-1zM325 96h2v1h-2zM325 415h2v1h-2zM373 96h1v1h-1zM373 100h1v1h-1zM373 110h1v1h-1zM373 139h1v2h-1zM373 338h1v2h-1zM373 368h1v1h-1zM373 382h1v1h-1zM416 96h1v2h-1zM416 132h1v1h-1zM416 154h1v2h-1zM416 181h1v3h-1zM416 295h1v3h-1zM416 322h1v2h-1zM416 381h1v1h-1zM62 97h1v1h-1zM62 155h1v2h-1zM62 181h1v3h-1zM62 295h1v3h-1zM62 323h1v2h-1zM62 346h1v1h-1zM62 381h1v2h-1zM104 97h1v1h-1zM104 109h1v1h-1zM104 111h1v1h-1zM104 141h1v1h-1zM104 337h1v1h-1zM104 367h1v1h-1zM104 379h1v1h-1zM104 381h1v1h-1zM151 97h1v1h-1zM151 381h1v1h-1zM327 97h1v1h-1zM327 381h1v1h-1zM374 97h1v1h-1zM374 99h1v1h-1zM374 111h1v1h-1zM374 141h1v1h-1zM374 337h1v1h-1zM374 367h1v1h-1zM374 369h1v1h-1zM374 381h1v1h-1zM61 98h1v1h-1zM61 157h1v2h-1zM61 184h1v3h-1zM61 292h1v3h-1zM61 321h1v2h-1zM61 380h1v1h-1zM150 98h1v1h-1zM150 178h1v2h-1zM150 380h1v1h-1zM233 98h1v3h-1zM233 110h1v1h-1zM233 112h1v1h-1zM233 114h1v1h-1zM328 98h1v1h-1zM328 149h1v1h-1zM328 380h1v1h-1zM417 98h1v1h-1zM417 156h1v2h-1zM417 184h1v3h-1zM417 292h1v3h-1zM417 320h1v2h-1zM417 380h1v1h-1zM60 99h1v1h-1zM60 159h1v1h-1zM60 187h1v5h-1zM60 288h1v2h-1zM60 291h1v1h-1zM60 318h1v3h-1zM60 379h1v1h-1zM333 99h1v2h-1zM333 178h1v1h-1zM418 99h1v1h-1zM418 158h1v3h-1zM418 187h1v1h-1zM418 189h1v2h-1zM418 287h1v5h-1zM418 319h1v1h-1zM418 379h1v1h-1zM59 100h1v2h-1zM59 140h1v1h-1zM59 161h1v2h-1zM59 192h1v4h-1zM59 283h1v5h-1zM59 316h1v2h-1zM59 377h1v2h-1zM101 100h1v1h-1zM101 106h1v1h-1zM101 115h1v1h-1zM101 146h1v1h-1zM101 332h1v1h-1zM101 363h1v1h-1zM101 378h1v1h-1zM147 100h1v1h-1zM147 171h1v2h-1zM147 378h1v1h-1zM147 406h1v2h-1zM280 100h1v4h-1zM377 100h1v1h-1zM377 115h1v1h-1zM377 146h1v1h-1zM377 332h1v1h-1zM377 363h1v1h-1zM377 372h1v1h-1zM377 378h1v1h-1zM419 100h1v2h-1zM419 161h1v2h-1zM419 191h1v5h-1zM419 283h1v4h-1zM419 316h1v2h-1zM419 338h1v1h-1zM419 377h1v2h-1zM100 101h1v1h-1zM100 105h1v1h-1zM100 116h1v1h-1zM100 147h1v1h-1zM100 331h1v1h-1zM100 362h1v1h-1zM100 377h1v1h-1zM146 101h1v1h-1zM146 293h1v1h-1zM146 408h1v2h-1zM378 101h1v1h-1zM378 116h1v1h-1zM378 147h1v1h-1zM378 331h1v1h-1zM378 362h1v1h-1zM378 373h1v1h-1zM378 377h1v1h-1zM58 102h1v1h-1zM58 163h1v2h-1zM58 196h1v3h-1zM58 280h1v3h-1zM58 314h1v2h-1zM58 376h1v1h-1zM420 102h1v1h-1zM420 163h1v2h-1zM420 196h1v3h-1zM420 280h1v3h-1zM420 314h1v2h-1zM420 376h1v1h-1zM57 103h1v1h-1zM57 165h1v3h-1zM57 199h1v5h-1zM57 275h1v5h-1zM57 311h1v3h-1zM57 375h1v1h-1zM112 103h2v1h-2zM112 375h2v1h-2zM365 103h2v1h-2zM365 375h2v1h-2zM421 103h1v1h-1zM421 165h1v3h-1zM421 199h1v5h-1zM421 275h1v5h-1zM421 311h1v3h-1zM421 375h1v1h-1zM56 104h1v2h-1zM56 168h1v3h-1zM56 204h1v7h-1zM56 269h1v6h-1zM56 308h1v1h-1zM56 310h1v1h-1zM56 373h1v2h-1zM97 104h1v1h-1zM97 119h1v1h-1zM97 151h1v1h-1zM97 327h1v1h-1zM97 359h1v1h-1zM97 363h1v1h-1zM97 374h1v1h-1zM97 416h1v1h-1zM279 104h1v3h-1zM367 104h1v1h-1zM367 132h1v1h-1zM367 186h1v1h-1zM367 346h1v1h-1zM367 371h1v1h-1zM367 374h1v1h-1zM367 386h1v1h-1zM422 104h1v2h-1zM422 168h1v1h-1zM422 170h1v1h-1zM422 204h1v6h-1zM422 268h1v7h-1zM422 308h1v3h-1zM422 373h1v2h-1zM96 105h1v1h-1zM96 120h1v1h-1zM96 152h1v2h-1zM96 325h1v2h-1zM96 358h1v1h-1zM96 364h1v1h-1zM96 373h1v1h-1zM110 105h1v1h-1zM110 133h1v1h-1zM110 345h1v1h-1zM110 373h1v1h-1zM368 105h1v1h-1zM368 133h1v1h-1zM368 345h1v1h-1zM368 373h1v1h-1zM382 105h1v1h-1zM382 114h1v1h-1zM382 120h1v1h-1zM382 152h1v1h-1zM382 325h1v2h-1zM382 358h1v1h-1zM382 373h1v1h-1zM55 106h1v1h-1zM55 171h1v3h-1zM55 211h1v6h-1zM55 262h1v7h-1zM55 305h1v3h-1zM55 350h1v1h-1zM55 372h1v1h-1zM109 106h2v1h-2zM383 106h1v1h-1zM383 121h1v1h-1zM383 153h1v2h-1zM383 323h1v2h-1zM383 357h1v1h-1zM383 372h1v1h-1zM383 415h1v1h-1zM423 106h1v1h-1zM423 128h1v1h-1zM423 171h1v3h-1zM423 210h1v7h-1zM423 262h1v6h-1zM423 305h1v3h-1zM423 372h1v1h-1zM54 107h1v2h-1zM54 174h1v2h-1zM54 217h1v7h-1zM54 256h1v2h-1zM54 259h1v3h-1zM54 302h1v3h-1zM54 370h1v2h-1zM424 107h1v2h-1zM424 174h1v3h-1zM424 217h1v3h-1zM424 221h1v2h-1zM424 255h1v7h-1zM424 303h1v2h-1zM424 370h1v2h-1zM53 109h1v1h-1zM53 177h1v3h-1zM53 224h1v3h-1zM53 228h1v11h-1zM53 240h1v2h-1zM53 243h1v13h-1zM53 299h1v3h-1zM53 369h1v1h-1zM425 109h1v1h-1zM425 177h1v3h-1zM425 223h1v13h-1zM425 237h1v2h-1zM425 240h1v11h-1zM425 252h1v3h-1zM425 299h1v3h-1zM425 369h1v1h-1zM52 110h1v2h-1zM52 180h1v4h-1zM52 295h1v4h-1zM52 367h1v2h-1zM91 110h1v2h-1zM91 120h1v1h-1zM91 126h1v2h-1zM91 162h1v2h-1zM91 315h1v2h-1zM91 334h1v1h-1zM91 352h1v2h-1zM91 368h1v1h-1zM91 411h1v1h-1zM426 110h1v2h-1zM426 180h1v4h-1zM426 295h1v4h-1zM426 367h1v2h-1zM386 111h2v1h-2zM51 112h1v1h-1zM51 184h1v3h-1zM51 292h1v1h-1zM51 294h1v1h-1zM51 366h1v1h-1zM90 112h1v1h-1zM90 119h1v1h-1zM90 128h1v2h-1zM90 164h1v2h-1zM90 313h1v2h-1zM90 350h1v2h-1zM90 366h1v1h-1zM388 112h1v1h-1zM388 127h1v2h-1zM388 164h1v2h-1zM388 313h1v2h-1zM388 349h1v2h-1zM388 359h1v1h-1zM388 366h1v1h-1zM427 112h1v1h-1zM427 184h1v1h-1zM427 186h1v1h-1zM427 292h1v3h-1zM427 366h1v1h-1zM50 113h1v2h-1zM50 135h1v1h-1zM50 187h1v4h-1zM50 288h1v4h-1zM50 353h1v1h-1zM50 364h1v2h-1zM383 113h2v1h-2zM389 113h1v1h-1zM389 130h1v1h-1zM389 166h1v1h-1zM389 312h1v1h-1zM389 348h1v1h-1zM389 365h1v1h-1zM389 410h1v1h-1zM428 113h1v2h-1zM428 125h1v1h-1zM428 187h1v4h-1zM428 288h1v4h-1zM428 343h1v1h-1zM428 364h1v2h-1zM350 114h1v1h-1zM350 193h1v1h-1zM350 364h1v1h-1zM350 391h1v2h-1zM350 423h1v1h-1zM49 115h1v1h-1zM49 191h1v1h-1zM49 193h1v1h-1zM49 285h1v3h-1zM49 363h1v1h-1zM351 115h1v1h-1zM351 363h1v1h-1zM351 393h1v1h-1zM351 424h1v2h-1zM429 115h1v1h-1zM429 191h1v3h-1zM429 285h1v1h-1zM429 287h1v1h-1zM429 363h1v1h-1zM48 116h1v1h-1zM48 194h1v3h-1zM48 282h1v3h-1zM48 362h1v1h-1zM352 116h1v1h-1zM352 362h1v1h-1zM352 394h1v1h-1zM352 426h1v2h-1zM430 116h1v1h-1zM430 194h1v3h-1zM430 282h1v3h-1zM430 362h1v1h-1zM47 117h1v2h-1zM47 197h1v5h-1zM47 277h1v5h-1zM47 360h1v2h-1zM86 117h2v1h-2zM86 350h2v1h-2zM353 117h1v1h-1zM353 361h1v1h-1zM353 395h1v2h-1zM353 428h1v1h-1zM431 117h1v2h-1zM431 197h1v5h-1zM431 277h1v5h-1zM431 360h1v2h-1zM88 118h2v1h-2zM88 349h2v1h-2zM46 119h1v1h-1zM46 202h1v7h-1zM46 270h1v6h-1zM46 359h1v1h-1zM122 119h2v2h-2zM122 434h2v1h-2zM432 119h1v1h-1zM432 203h1v6h-1zM432 270h1v7h-1zM432 359h1v1h-1zM45 120h1v2h-1zM45 210h1v6h-1zM45 263h1v7h-1zM45 357h1v2h-1zM433 120h1v2h-1zM433 209h1v7h-1zM433 263h1v6h-1zM433 357h1v2h-1zM92 121h2v1h-2zM92 333h2v1h-2zM44 122h1v1h-1zM44 216h1v7h-1zM44 257h1v2h-1zM44 260h1v3h-1zM44 355h1v1h-1zM234 122h1v1h-1zM234 124h1v8h-1zM433 122h2v1h-2zM433 346h2v1h-2zM43 123h1v2h-1zM43 223h1v3h-1zM43 227h1v15h-1zM43 243h1v14h-1zM43 353h1v2h-1zM431 123h2v1h-2zM431 345h2v1h-2zM435 123h1v2h-1zM435 222h1v14h-1zM435 237h1v15h-1zM435 253h1v3h-1zM435 353h1v2h-1zM397 124h2v1h-2zM429 124h2v1h-2zM429 344h2v1h-2zM42 125h1v2h-1zM42 352h1v1h-1zM273 125h1v1h-1zM273 127h1v1h-1zM273 403h1v2h-1zM395 125h2v1h-2zM395 139h2v1h-2zM395 344h2v1h-2zM436 125h1v2h-1zM436 351h1v2h-1zM426 126h2v1h-2zM426 185h2v1h-2zM426 342h2v1h-2zM41 127h1v2h-1zM41 350h1v2h-1zM424 127h2v1h-2zM424 341h2v1h-2zM437 127h1v2h-1zM437 349h1v2h-1zM391 128h2v1h-2zM391 361h2v1h-2zM40 129h1v1h-1zM40 348h1v2h-1zM272 129h1v2h-1zM389 129h2v1h-2zM389 360h2v1h-2zM421 129h2v1h-2zM421 187h2v1h-2zM421 284h2v1h-2zM438 129h1v2h-1zM438 347h1v1h-1zM40 130h2v1h-2zM76 130h2v1h-2zM419 130h2v1h-2zM39 131h1v2h-1zM39 346h1v2h-1zM42 131h2v1h-2zM78 131h2v1h-2zM271 131h1v4h-1zM417 131h2v1h-2zM417 337h2v1h-2zM439 131h1v2h-1zM439 346h1v1h-1zM44 132h2v1h-2zM44 356h2v1h-2zM38 133h1v2h-1zM38 344h1v2h-1zM46 133h2v1h-2zM46 355h2v1h-2zM414 133h2v1h-2zM414 153h2v1h-2zM414 317h2v1h-2zM440 133h1v2h-1zM440 344h1v2h-1zM48 134h2v1h-2zM48 354h2v1h-2zM82 134h2v1h-2zM82 339h2v1h-2zM82 353h2v1h-2zM412 134h2v1h-2zM412 154h2v1h-2zM412 316h2v1h-2zM37 135h1v2h-1zM37 342h1v2h-1zM84 135h2v1h-2zM84 338h2v1h-2zM270 135h1v2h-1zM441 135h1v2h-1zM441 342h1v2h-1zM51 136h2v1h-2zM51 293h2v1h-2zM51 352h2v1h-2zM409 136h2v1h-2zM36 137h1v2h-1zM36 340h1v2h-1zM53 137h2v1h-2zM53 351h2v1h-2zM406 137h3v1h-3zM442 137h1v2h-1zM442 340h1v2h-1zM55 138h2v1h-2zM406 138h2v1h-2zM406 157h2v1h-2zM406 331h2v1h-2zM35 139h1v2h-1zM35 338h1v2h-1zM57 139h2v1h-2zM404 139h2v1h-2zM404 330h2v1h-2zM443 139h1v2h-1zM443 338h1v2h-1zM393 140h2v1h-2zM393 343h2v1h-2zM34 141h1v3h-1zM34 336h1v2h-1zM60 141h2v1h-2zM60 347h2v1h-2zM444 141h1v2h-1zM444 335h1v3h-1zM62 142h2v1h-2zM62 307h2v1h-2zM390 142h2v1h-2zM400 142h2v1h-2zM64 143h2v1h-2zM64 306h2v1h-2zM445 143h1v3h-1zM445 333h1v2h-1zM33 144h1v2h-1zM33 333h1v3h-1zM66 144h3v1h-3zM67 145h2v1h-2zM67 323h2v1h-2zM385 145h2v1h-2zM385 357h2v1h-2zM32 146h1v3h-1zM32 330h1v3h-1zM69 146h2v1h-2zM69 322h2v1h-2zM446 146h1v3h-1zM446 330h1v3h-1zM71 147h2v1h-2zM71 321h2v1h-2zM71 340h2v1h-2zM73 148h2v1h-2zM73 339h2v1h-2zM379 148h3v1h-3zM31 149h1v2h-1zM31 328h1v2h-1zM447 149h1v2h-1zM447 328h1v2h-1zM30 151h1v2h-1zM30 326h1v2h-1zM448 151h1v2h-1zM448 326h1v2h-1zM29 153h1v3h-1zM29 323h1v3h-1zM449 153h1v3h-1zM449 323h1v3h-1zM322 155h1v1h-1zM322 408h1v2h-1zM410 155h2v1h-2zM410 333h2v1h-2zM28 156h1v2h-1zM28 321h1v2h-1zM408 156h2v1h-2zM408 332h2v1h-2zM450 156h1v2h-1zM450 321h1v2h-1zM321 157h1v1h-1zM321 406h1v1h-1zM27 158h1v2h-1zM27 319h1v2h-1zM320 158h1v1h-1zM451 158h1v2h-1zM451 319h1v2h-1zM319 159h1v1h-1zM26 160h1v3h-1zM26 316h1v3h-1zM60 160h3v1h-3zM452 160h1v3h-1zM452 316h1v3h-1zM63 161h2v1h-2zM63 325h2v1h-2zM63 345h2v1h-2zM65 162h2v1h-2zM65 324h2v1h-2zM65 344h2v1h-2zM25 163h1v3h-1zM25 314h1v2h-1zM67 163h3v1h-3zM453 163h1v2h-1zM453 313h1v3h-1zM454 165h1v3h-1zM454 311h1v2h-1zM24 166h1v2h-1zM24 311h1v3h-1zM23 168h1v3h-1zM23 308h1v3h-1zM455 168h1v3h-1zM455 308h1v3h-1zM420 169h3v1h-3zM420 301h3v1h-3zM417 170h3v1h-3zM22 171h1v4h-1zM22 304h1v4h-1zM415 171h2v1h-2zM415 336h2v1h-2zM456 171h1v4h-1zM456 304h1v4h-1zM413 172h2v1h-2zM413 335h2v1h-2zM148 173h1v3h-1zM148 404h1v2h-1zM21 175h1v4h-1zM21 301h1v3h-1zM457 175h1v3h-1zM457 300h1v4h-1zM54 176h2v1h-2zM149 176h1v2h-1zM149 403h1v1h-1zM56 177h3v1h-3zM56 309h3v1h-3zM59 178h2v1h-2zM458 178h1v4h-1zM458 296h1v4h-1zM20 179h1v4h-1zM20 297h1v4h-1zM61 179h3v1h-3zM459 182h1v4h-1zM459 292h1v4h-1zM19 183h1v4h-1zM19 293h1v4h-1zM138 185h4v1h-4zM142 186h4v1h-4zM423 186h3v1h-3zM460 186h1v4h-1zM460 288h1v4h-1zM18 187h1v4h-1zM18 289h1v4h-1zM368 187h2v1h-2zM368 372h2v1h-2zM418 188h3v1h-3zM372 189h2v1h-2zM374 190h2v1h-2zM461 190h1v4h-1zM461 284h1v4h-1zM17 191h1v4h-1zM17 285h1v4h-1zM49 192h3v1h-3zM52 193h4v1h-4zM52 275h4v1h-4zM56 194h2v1h-2zM56 291h2v1h-2zM56 349h2v1h-2zM462 194h1v4h-1zM462 280h1v4h-1zM16 195h1v4h-1zM16 281h1v4h-1zM463 198h1v6h-1zM463 275h1v5h-1zM15 199h1v5h-1zM15 275h1v6h-1zM340 199h3v1h-3zM340 406h3v1h-3zM343 200h3v1h-3zM427 202h6v1h-6zM423 203h4v1h-4zM423 285h4v1h-4zM14 204h1v8h-1zM14 268h1v7h-1zM464 204h1v7h-1zM464 267h1v8h-1zM45 209h6v1h-6zM51 210h4v1h-4zM465 211h1v16h-1zM465 251h1v16h-1zM13 212h1v16h-1zM13 252h1v16h-1zM434 216h1v3h-1zM434 220h1v2h-1zM434 256h1v7h-1zM434 355h1v2h-1zM429 219h6v1h-6zM424 220h5v1h-5zM43 226h6v1h-6zM49 227h5v1h-5zM466 227h1v8h-1zM466 236h1v15h-1zM12 228h1v15h-1zM12 244h1v8h-1zM451 235h16v1h-16zM425 236h26v1h-26zM53 239h20v1h-20zM406 239h20v1h-20zM28 242h26v1h-26zM12 243h16v1h-16zM425 251h5v1h-5zM430 252h6v1h-6zM50 258h5v1h-5zM44 259h6v1h-6zM424 268h4v1h-4zM428 269h6v1h-6zM46 276h6v1h-6zM427 286h3v1h-3zM58 290h3v1h-3zM53 292h3v1h-3zM143 295h1v1h-1zM143 382h1v1h-1zM143 413h1v2h-1zM415 299h3v1h-3zM418 300h2v1h-2zM423 302h2v1h-2zM59 308h3v1h-3zM409 315h3v1h-3zM416 318h3v1h-3zM97 330h3v1h-3zM95 331h2v1h-2zM95 415h2v1h-2zM410 334h3v1h-3zM89 335h2v1h-2zM89 410h2v1h-2zM77 336h2v1h-2zM87 336h2v1h-2zM420 339h2v1h-2zM422 340h2v1h-2zM70 341h3v1h-3zM68 342h2v1h-2zM399 347h2v1h-2zM435 347h2v1h-2zM58 348h2v1h-2zM401 348h2v1h-2zM437 348h2v1h-2zM231 350h1v5h-1zM80 354h2v1h-2zM355 358h2v2h-2zM94 365h2v1h-2zM91 367h2v1h-2zM145 378h1v2h-1zM144 380h1v2h-1zM144 412h1v1h-1zM124 386h2v1h-2zM124 435h2v1h-2zM126 387h2v1h-2zM126 436h2v1h-2zM128 388h2v1h-2zM138 390h1v1h-1zM138 407h1v1h-1zM138 422h1v2h-1zM349 390h1v1h-1zM349 401h1v1h-1zM349 421h1v2h-1zM115 391h3v1h-3zM362 391h2v1h-2zM120 395h2v1h-2zM120 433h2v1h-2zM356 396h2v1h-2zM140 397h2v1h-2zM334 399h2v1h-2zM192 400h5v1h-5zM332 400h2v1h-2zM197 401h5v1h-5zM197 431h5v1h-5zM277 401h6v1h-6zM202 402h6v1h-6zM272 402h5v1h-5zM208 403h6v1h-6zM266 403h6v1h-6zM214 404h6v1h-6zM260 404h6v1h-6zM220 405h5v1h-5zM254 405h6v1h-6zM136 406h2v1h-2zM157 406h2v1h-2zM157 417h2v1h-2zM159 407h2v1h-2zM159 418h2v1h-2zM314 409h3v1h-3zM163 410h1v2h-1zM323 410h1v2h-1zM144 411h3v1h-3zM309 411h2v1h-2zM387 411h2v1h-2zM162 412h1v2h-1zM307 412h2v1h-2zM305 413h2v1h-2zM161 414h1v2h-1zM175 414h2v1h-2zM306 414h1v1h-1zM325 414h1v1h-1zM307 415h1v2h-1zM160 416h1v2h-1zM179 416h1v2h-1zM323 416h2v1h-2zM381 416h2v1h-2zM308 417h1v3h-1zM178 418h1v2h-1zM187 418h5v1h-5zM200 418h1v3h-1zM318 418h3v1h-3zM283 419h5v1h-5zM290 419h1v2h-1zM177 420h1v3h-1zM309 420h1v2h-1zM194 421h1v2h-1zM291 421h1v2h-1zM269 422h6v1h-6zM176 423h1v1h-1zM193 423h1v4h-1zM211 423h6v1h-6zM262 423h7v1h-7zM292 423h1v3h-1zM210 424h1v4h-1zM217 424h7v1h-7zM256 424h6v1h-6zM224 425h32v1h-32zM258 425h1v4h-1zM227 426h1v4h-1zM242 426h1v9h-1zM242 436h1v15h-1zM293 426h1v1h-1zM192 427h1v2h-1zM209 428h1v4h-1zM259 429h1v5h-1zM226 430h1v5h-1zM276 431h6v1h-6zM202 432h8v1h-8zM270 432h7v1h-7zM356 433h3v1h-3zM216 434h7v1h-7zM257 434h6v1h-6zM223 435h34v1h-34zM128 437h3v1h-3zM141 444h3v1h-3zM243 451h1v15h-1zM163 453h3v1h-3zM166 454h2v1h-2zM175 457h4v1h-4zM179 458h4v1h-4zM297 458h4v1h-4zM183 459h4v1h-4zM293 459h4v1h-4zM289 460h4v1h-4zM191 461h4v1h-4zM285 461h4v1h-4zM195 462h4v1h-4zM281 462h4v1h-4zM275 463h6v1h-6zM204 464h8v1h-8zM212 465h16v1h-16zM252 465h16v1h-16zM228 466h24v1h-24z"/><path fill="#808080" d="M226 44h1v9h-1zM226 175h1v1h-1zM226 177h1v1h-1zM226 179h1v1h-1zM226 259h1v1h-1zM229 44h1v9h-1zM229 191h1v1h-1zM229 193h1v1h-1zM229 229h1v1h-1zM229 245h1v1h-1zM229 381h1v4h-1zM232 44h1v5h-1zM232 205h1v1h-1zM232 207h1v1h-1zM232 249h1v1h-1zM232 350h1v1h-1zM239 44h1v9h-1zM239 239h1v1h-1zM239 426h1v9h-1zM242 44h1v5h-1zM242 235h1v1h-1zM242 251h1v1h-1zM242 253h1v1h-1zM242 255h1v1h-1zM245 44h1v9h-1zM245 235h1v1h-1zM245 245h1v1h-1zM245 267h1v1h-1zM245 269h1v1h-1zM245 426h1v4h-1zM248 44h1v9h-1zM248 225h1v1h-1zM248 281h1v1h-1zM248 283h1v1h-1zM255 44h1v10h-1zM255 215h1v1h-1zM255 229h1v1h-1zM255 255h1v1h-1zM255 315h1v1h-1zM255 317h1v1h-1zM255 426h1v3h-1zM222 45h1v5h-1zM222 157h1v1h-1zM222 159h1v1h-1zM259 45h1v5h-1zM259 209h1v1h-1zM259 226h1v1h-1zM259 333h1v1h-1zM259 335h1v1h-1zM259 337h1v1h-1zM262 45h1v5h-1zM262 205h1v1h-1zM262 263h1v1h-1zM262 347h1v1h-1zM262 349h1v1h-1zM262 351h1v1h-1zM262 425h1v4h-1zM209 46h1v5h-1zM209 93h1v1h-1zM209 95h1v1h-1zM209 97h1v1h-1zM209 258h1v1h-1zM209 283h1v1h-1zM212 46h1v5h-1zM212 109h1v1h-1zM212 111h1v1h-1zM212 211h1v1h-1zM212 279h1v1h-1zM215 46h1v4h-1zM215 123h1v1h-1zM215 125h1v1h-1zM215 254h1v1h-1zM215 275h1v1h-1zM265 46h1v5h-1zM265 201h1v1h-1zM265 222h1v1h-1zM265 363h1v1h-1zM265 365h1v1h-1zM265 424h1v4h-1zM205 47h1v3h-1zM205 77h1v1h-1zM205 261h1v1h-1zM205 289h1v1h-1zM272 47h1v5h-1zM272 273h1v1h-1zM272 395h1v1h-1zM272 397h1v1h-1zM272 399h1v1h-1zM272 425h1v4h-1zM276 47h1v3h-1zM276 277h1v1h-1zM199 48h1v5h-1zM199 265h1v1h-1zM199 299h1v1h-1zM199 428h1v3h-1zM279 48h1v3h-1zM279 179h1v1h-1zM279 213h1v1h-1zM279 426h1v5h-1zM195 49h1v3h-1zM195 267h1v1h-1zM195 305h1v1h-1zM233 49h1v4h-1zM233 209h1v1h-1zM233 211h1v1h-1zM233 233h1v1h-1zM233 243h1v1h-1zM233 426h1v9h-1zM241 49h1v4h-1zM241 238h1v1h-1zM241 241h1v1h-1zM241 247h1v1h-1zM241 249h1v1h-1zM282 49h1v3h-1zM282 175h1v1h-1zM282 283h1v1h-1zM282 423h1v4h-1zM192 50h1v3h-1zM192 191h1v1h-1zM192 309h1v1h-1zM206 50h1v4h-1zM206 79h1v1h-1zM206 81h1v1h-1zM206 83h1v1h-1zM206 205h1v1h-1zM206 427h1v5h-1zM216 50h1v4h-1zM216 127h1v1h-1zM216 129h1v1h-1zM216 131h1v1h-1zM216 215h1v1h-1zM216 273h1v1h-1zM216 429h1v5h-1zM223 50h1v3h-1zM223 161h1v1h-1zM223 163h1v1h-1zM223 223h1v1h-1zM223 249h1v1h-1zM223 263h1v1h-1zM223 425h1v10h-1zM258 50h1v4h-1zM258 211h1v1h-1zM258 259h1v1h-1zM258 329h1v1h-1zM258 331h1v1h-1zM261 50h1v4h-1zM261 207h1v1h-1zM261 225h1v1h-1zM261 343h1v1h-1zM261 345h1v1h-1zM275 50h1v4h-1zM275 185h1v1h-1zM275 216h1v1h-1zM189 51h1v2h-1zM189 271h1v1h-1zM189 313h1v1h-1zM189 426h1v2h-1zM210 51h1v4h-1zM210 99h1v1h-1zM210 101h1v1h-1zM210 209h1v1h-1zM213 51h1v4h-1zM213 113h1v1h-1zM213 115h1v1h-1zM213 256h1v1h-1zM213 277h1v1h-1zM213 428h1v5h-1zM264 51h1v4h-1zM264 265h1v1h-1zM264 357h1v1h-1zM264 359h1v1h-1zM264 361h1v1h-1zM278 51h1v4h-1zM278 181h1v1h-1zM278 279h1v1h-1zM278 422h1v4h-1zM289 51h1v2h-1zM289 165h1v1h-1zM289 207h1v1h-1zM289 426h1v2h-1zM196 52h1v4h-1zM196 195h1v1h-1zM196 303h1v1h-1zM196 427h1v3h-1zM271 52h1v4h-1zM271 191h1v1h-1zM271 218h1v1h-1zM271 391h1v1h-1zM271 393h1v1h-1zM271 423h1v2h-1zM281 52h1v4h-1zM281 177h1v1h-1zM281 212h1v1h-1zM281 421h1v2h-1zM292 52h1v2h-1zM292 161h1v1h-1zM292 293h1v1h-1zM182 53h1v2h-1zM182 181h1v1h-1zM182 323h1v1h-1zM182 417h1v2h-1zM190 53h1v4h-1zM190 189h1v1h-1zM190 311h1v1h-1zM190 422h1v4h-1zM193 53h1v4h-1zM193 269h1v1h-1zM193 307h1v1h-1zM200 53h1v4h-1zM200 199h1v1h-1zM200 297h1v1h-1zM200 424h1v4h-1zM288 53h1v4h-1zM288 167h1v1h-1zM288 289h1v1h-1zM288 422h1v4h-1zM295 53h1v2h-1zM295 203h1v1h-1zM295 420h1v4h-1zM179 54h1v2h-1zM179 177h1v1h-1zM179 278h1v1h-1zM179 424h1v1h-1zM207 54h1v2h-1zM207 85h1v1h-1zM207 87h1v1h-1zM207 260h1v1h-1zM207 287h1v1h-1zM207 423h1v4h-1zM274 54h1v2h-1zM274 275h1v1h-1zM291 54h1v4h-1zM291 206h1v1h-1zM299 54h1v1h-1zM299 301h1v1h-1zM299 423h1v2h-1zM176 55h1v2h-1zM176 333h1v1h-1zM176 415h1v2h-1zM183 55h1v4h-1zM183 275h1v1h-1zM183 424h1v2h-1zM277 55h1v2h-1zM277 183h1v1h-1zM277 215h1v1h-1zM294 55h1v4h-1zM294 157h1v1h-1zM294 295h1v1h-1zM294 418h1v2h-1zM298 55h1v3h-1zM298 151h1v1h-1zM298 419h1v4h-1zM172 56h1v2h-1zM172 339h1v1h-1zM172 416h1v2h-1zM180 56h1v4h-1zM180 327h1v1h-1zM180 421h1v3h-1zM197 56h1v2h-1zM197 266h1v1h-1zM197 301h1v1h-1zM197 423h1v4h-1zM280 56h1v2h-1zM280 281h1v1h-1zM305 56h1v1h-1zM305 63h1v2h-1zM305 141h1v1h-1zM305 197h1v1h-1zM305 307h1v1h-1zM305 419h1v2h-1zM177 57h1v4h-1zM177 175h1v1h-1zM177 279h1v1h-1zM177 331h1v1h-1zM191 57h1v2h-1zM191 270h1v1h-1zM191 420h1v2h-1zM194 57h1v2h-1zM194 193h1v1h-1zM287 57h1v2h-1zM287 208h1v1h-1zM287 420h1v2h-1zM304 57h1v3h-1zM304 143h1v1h-1zM304 417h1v2h-1zM308 57h1v2h-1zM308 66h1v1h-1zM308 137h1v1h-1zM166 58h1v2h-1zM166 66h1v2h-1zM166 347h1v1h-1zM166 411h1v2h-1zM166 419h1v2h-1zM173 58h1v2h-1zM173 171h1v1h-1zM173 281h1v1h-1zM173 337h1v1h-1zM173 414h1v2h-1zM173 422h1v1h-1zM290 58h1v2h-1zM290 163h1v1h-1zM290 291h1v1h-1zM297 58h1v2h-1zM297 153h1v1h-1zM297 202h1v1h-1zM297 299h1v1h-1zM297 417h1v2h-1zM312 58h1v2h-1zM312 66h1v2h-1zM312 131h1v1h-1zM312 411h1v2h-1zM312 419h1v2h-1zM163 59h1v2h-1zM163 67h1v2h-1zM163 161h1v1h-1zM163 288h1v1h-1zM163 418h1v2h-1zM184 59h1v2h-1zM184 183h1v1h-1zM184 321h1v1h-1zM184 420h1v4h-1zM293 59h1v2h-1zM293 159h1v1h-1zM293 204h1v1h-1zM307 59h1v2h-1zM307 309h1v1h-1zM315 59h1v2h-1zM315 317h1v1h-1zM315 410h1v2h-1zM315 418h1v2h-1zM167 60h1v3h-1zM167 165h1v1h-1zM167 285h1v1h-1zM167 417h1v2h-1zM174 60h1v2h-1zM174 335h1v1h-1zM174 419h1v3h-1zM181 60h1v2h-1zM181 179h1v1h-1zM181 276h1v1h-1zM181 325h1v1h-1zM181 419h1v2h-1zM296 60h1v2h-1zM296 155h1v1h-1zM296 297h1v1h-1zM296 424h1v2h-1zM303 60h1v2h-1zM303 198h1v1h-1zM303 305h1v1h-1zM303 415h1v2h-1zM311 60h1v2h-1zM311 193h1v1h-1zM311 313h1v1h-1zM311 416h1v3h-1zM160 61h1v2h-1zM160 69h1v1h-1zM160 410h1v2h-1zM164 61h1v3h-1zM164 351h1v1h-1zM164 415h1v3h-1zM178 61h1v2h-1zM178 329h1v1h-1zM306 61h1v2h-1zM306 139h1v1h-1zM306 421h1v2h-1zM314 61h1v3h-1zM314 127h1v1h-1zM314 415h1v3h-1zM157 62h1v2h-1zM157 155h1v1h-1zM157 292h1v1h-1zM157 361h1v1h-1zM157 408h1v2h-1zM157 416h1v1h-1zM175 62h1v2h-1zM175 173h1v1h-1zM175 280h1v1h-1zM175 417h1v2h-1zM302 62h1v2h-1zM302 145h1v1h-1zM302 422h1v2h-1zM310 62h1v2h-1zM310 133h1v1h-1zM310 414h1v2h-1zM321 62h1v1h-1zM321 69h1v2h-1zM321 117h1v1h-1zM321 323h1v1h-1zM321 415h1v2h-1zM161 63h1v2h-1zM161 159h1v1h-1zM161 289h1v1h-1zM161 355h1v1h-1zM161 409h1v1h-1zM168 63h1v2h-1zM168 345h1v1h-1zM168 415h1v2h-1zM320 63h1v2h-1zM320 71h1v1h-1zM320 119h1v1h-1zM320 412h1v3h-1zM158 64h1v3h-1zM158 359h1v1h-1zM158 407h1v1h-1zM158 414h1v2h-1zM165 64h1v2h-1zM165 163h1v1h-1zM165 287h1v1h-1zM165 349h1v1h-1zM165 413h1v2h-1zM309 64h1v2h-1zM309 135h1v1h-1zM309 194h1v1h-1zM309 311h1v1h-1zM309 412h1v2h-1zM313 64h1v2h-1zM313 129h1v1h-1zM313 315h1v1h-1zM313 413h1v2h-1zM324 64h1v1h-1zM324 70h1v2h-1zM324 113h1v1h-1zM324 405h1v1h-1zM150 65h1v2h-1zM150 72h1v2h-1zM150 371h1v1h-1zM150 407h1v2h-1zM162 65h1v2h-1zM162 353h1v1h-1zM169 65h1v2h-1zM169 167h1v1h-1zM169 284h1v1h-1zM169 343h1v1h-1zM169 413h1v2h-1zM319 65h1v2h-1zM319 121h1v1h-1zM319 188h1v1h-1zM319 321h1v1h-1zM319 410h1v2h-1zM323 65h1v2h-1zM323 72h1v1h-1zM323 115h1v1h-1zM323 185h1v1h-1zM323 325h1v1h-1zM327 65h1v1h-1zM327 72h1v2h-1zM327 109h1v1h-1zM327 182h1v1h-1zM327 329h1v1h-1zM327 404h1v1h-1zM327 410h1v2h-1zM326 66h1v2h-1zM326 74h1v1h-1zM326 408h1v2h-1zM147 67h1v1h-1zM147 74h1v2h-1zM147 145h1v1h-1zM147 298h1v1h-1zM147 375h1v1h-1zM151 67h1v2h-1zM151 74h1v1h-1zM151 149h1v1h-1zM151 296h1v1h-1zM151 369h1v1h-1zM151 405h1v2h-1zM151 413h1v1h-1zM159 67h1v2h-1zM159 157h1v1h-1zM159 290h1v1h-1zM159 357h1v1h-1zM159 412h1v2h-1zM318 67h1v2h-1zM318 409h1v1h-1zM318 416h1v2h-1zM322 67h1v2h-1zM330 67h1v1h-1zM330 402h1v1h-1zM330 409h1v2h-1zM144 68h1v2h-1zM144 74h1v1h-1zM144 175h1v1h-1zM144 185h1v1h-1zM144 404h1v2h-1zM148 68h1v2h-1zM148 76h1v1h-1zM148 178h1v1h-1zM148 411h1v1h-1zM325 68h1v2h-1zM325 111h1v1h-1zM325 327h1v1h-1zM325 406h1v2h-1zM329 68h1v2h-1zM329 105h1v1h-1zM329 331h1v1h-1zM329 407h1v2h-1zM152 69h1v2h-1zM152 404h1v1h-1zM152 411h1v2h-1zM317 69h1v1h-1zM317 123h1v1h-1zM317 189h1v1h-1zM317 319h1v1h-1zM317 414h1v2h-1zM141 70h1v1h-1zM141 302h1v1h-1zM141 402h1v2h-1zM145 70h1v2h-1zM145 75h1v2h-1zM145 143h1v1h-1zM145 299h1v1h-1zM145 402h1v2h-1zM149 70h1v2h-1zM149 147h1v1h-1zM149 297h1v1h-1zM149 373h1v1h-1zM149 409h1v2h-1zM328 70h1v2h-1zM328 107h1v1h-1zM328 405h1v2h-1zM328 412h1v2h-1zM336 70h1v1h-1zM336 77h1v2h-1zM336 339h1v1h-1zM336 406h1v2h-1zM142 71h1v2h-1zM142 139h1v1h-1zM142 174h1v1h-1zM142 184h1v1h-1zM142 295h1v1h-1zM142 400h1v2h-1zM142 408h1v1h-1zM153 71h1v2h-1zM153 151h1v1h-1zM153 294h1v1h-1zM153 367h1v1h-1zM153 409h1v2h-1zM335 71h1v2h-1zM335 79h1v1h-1zM335 337h1v1h-1zM335 405h1v1h-1zM146 72h1v2h-1zM146 77h1v1h-1zM146 176h1v1h-1zM146 377h1v1h-1zM146 401h1v1h-1zM339 72h1v1h-1zM339 78h1v2h-1zM339 175h1v1h-1zM339 398h1v2h-1zM143 73h1v1h-1zM143 141h1v1h-1zM143 301h1v1h-1zM143 399h1v1h-1zM143 406h1v2h-1zM154 73h1v1h-1zM154 365h1v1h-1zM154 407h1v2h-1zM154 414h1v1h-1zM334 73h1v2h-1zM334 404h1v1h-1zM334 409h1v2h-1zM338 73h1v2h-1zM338 80h1v1h-1zM338 194h1v1h-1zM338 341h1v1h-1zM342 73h1v1h-1zM342 79h1v1h-1zM342 192h1v1h-1zM342 345h1v1h-1zM342 397h1v2h-1zM342 404h1v1h-1zM136 74h1v1h-1zM136 80h1v2h-1zM136 133h1v1h-1zM136 170h1v1h-1zM136 181h1v1h-1zM136 399h1v1h-1zM136 405h1v1h-1zM341 74h1v2h-1zM341 80h1v2h-1zM341 396h1v1h-1zM341 402h1v2h-1zM133 75h1v1h-1zM133 82h1v2h-1zM133 307h1v1h-1zM133 403h1v1h-1zM137 75h1v2h-1zM137 82h1v1h-1zM137 305h1v1h-1zM137 397h1v2h-1zM137 403h1v2h-1zM333 75h1v2h-1zM333 179h1v1h-1zM333 335h1v1h-1zM333 402h1v2h-1zM333 407h1v2h-1zM337 75h1v2h-1zM337 408h1v1h-1zM345 75h1v1h-1zM345 395h1v2h-1zM345 403h1v1h-1zM134 76h1v2h-1zM134 84h1v1h-1zM134 131h1v1h-1zM134 168h1v1h-1zM134 180h1v1h-1zM134 401h1v2h-1zM340 76h1v2h-1zM340 82h1v1h-1zM340 193h1v1h-1zM340 343h1v1h-1zM340 400h1v2h-1zM344 76h1v2h-1zM344 191h1v1h-1zM344 347h1v1h-1zM344 394h1v1h-1zM344 401h1v2h-1zM130 77h1v1h-1zM130 83h1v1h-1zM130 127h1v1h-1zM130 178h1v1h-1zM130 303h1v1h-1zM130 390h1v1h-1zM130 395h1v1h-1zM138 77h1v2h-1zM138 135h1v1h-1zM138 171h1v1h-1zM138 182h1v1h-1zM138 298h1v1h-1zM138 396h1v1h-1zM138 401h1v2h-1zM332 77h1v1h-1zM332 101h1v1h-1zM332 401h1v1h-1zM332 405h1v2h-1zM131 78h1v2h-1zM131 84h1v2h-1zM131 308h1v1h-1zM131 393h1v2h-1zM135 78h1v2h-1zM135 306h1v1h-1zM135 400h1v1h-1zM343 78h1v1h-1zM343 399h1v2h-1zM127 79h1v1h-1zM127 311h1v1h-1zM127 388h1v1h-1zM127 394h1v1h-1zM127 399h1v1h-1zM139 79h1v2h-1zM139 303h1v1h-1zM139 399h1v2h-1zM139 406h1v1h-1zM351 79h1v1h-1zM351 84h1v1h-1zM351 90h1v1h-1zM351 399h1v1h-1zM128 80h1v2h-1zM128 125h1v1h-1zM128 177h1v1h-1zM128 304h1v1h-1zM128 393h1v1h-1zM128 397h1v2h-1zM132 80h1v2h-1zM132 86h1v1h-1zM132 129h1v1h-1zM132 167h1v1h-1zM132 179h1v1h-1zM132 392h1v1h-1zM350 80h1v2h-1zM350 85h1v1h-1zM350 188h1v1h-1zM350 353h1v1h-1zM350 397h1v2h-1zM353 81h1v1h-1zM353 87h1v1h-1zM353 166h1v1h-1zM353 389h1v2h-1zM129 82h1v1h-1zM129 310h1v1h-1zM129 391h1v2h-1zM129 396h1v1h-1zM349 82h1v1h-1zM349 86h1v2h-1zM349 168h1v1h-1zM349 396h1v1h-1zM352 82h1v2h-1zM352 88h1v2h-1zM352 355h1v1h-1zM352 388h1v1h-1zM121 83h1v1h-1zM121 88h1v1h-1zM121 94h1v1h-1zM121 315h1v1h-1zM121 390h1v1h-1zM348 83h1v1h-1zM348 88h1v1h-1zM348 189h1v1h-1zM348 351h1v1h-1zM348 395h1v1h-1zM348 401h1v1h-1zM356 83h1v1h-1zM356 89h1v1h-1zM356 185h1v1h-1zM356 389h1v1h-1zM356 393h1v2h-1zM122 84h1v2h-1zM122 89h1v1h-1zM122 154h1v3h-1zM122 389h1v1h-1zM122 395h1v1h-1zM347 84h1v2h-1zM347 170h1v1h-1zM347 393h1v2h-1zM347 399h1v2h-1zM355 84h1v2h-1zM355 90h1v2h-1zM355 387h1v2h-1zM355 392h1v1h-1zM119 85h1v1h-1zM119 92h1v1h-1zM119 96h1v1h-1zM119 309h1v1h-1zM119 316h1v1h-1zM119 382h1v1h-1zM119 393h1v1h-1zM359 85h1v1h-1zM359 96h1v1h-1zM359 162h1v1h-1zM359 382h1v1h-1zM359 386h1v1h-1zM359 393h1v1h-1zM120 86h1v2h-1zM120 93h1v1h-1zM120 391h1v2h-1zM123 86h1v1h-1zM123 90h1v2h-1zM123 157h1v4h-1zM123 314h1v1h-1zM123 387h1v2h-1zM123 393h1v2h-1zM346 86h1v1h-1zM346 190h1v1h-1zM346 349h1v1h-1zM346 392h1v1h-1zM346 397h1v2h-1zM354 86h1v1h-1zM354 186h1v1h-1zM354 357h1v1h-1zM354 391h1v1h-1zM358 86h1v2h-1zM358 385h1v1h-1zM358 391h1v2h-1zM124 87h1v1h-1zM124 121h1v1h-1zM124 161h1v2h-1zM124 392h1v1h-1zM116 88h1v1h-1zM116 93h1v1h-1zM116 381h1v1h-1zM116 386h1v1h-1zM125 88h1v2h-1zM125 312h1v1h-1zM125 391h1v1h-1zM125 397h1v1h-1zM357 88h1v1h-1zM357 163h1v1h-1zM357 384h1v1h-1zM357 390h1v1h-1zM357 395h1v1h-1zM117 89h1v1h-1zM117 94h1v1h-1zM117 317h1v1h-1zM117 380h1v1h-1zM117 385h1v1h-1zM208 89h1v1h-1zM208 91h1v1h-1zM208 207h1v1h-1zM208 285h1v1h-1zM364 89h1v1h-1zM364 95h1v1h-1zM364 100h1v1h-1zM364 378h1v1h-1zM364 387h1v1h-1zM113 90h1v1h-1zM113 99h1v1h-1zM113 320h1v1h-1zM113 379h1v1h-1zM113 384h1v1h-1zM118 90h1v2h-1zM118 95h1v1h-1zM118 383h1v2h-1zM126 90h1v1h-1zM126 123h1v1h-1zM126 176h1v1h-1zM126 389h1v2h-1zM126 395h1v2h-1zM363 90h1v2h-1zM363 96h1v1h-1zM363 159h1v1h-1zM363 386h1v1h-1zM114 91h1v1h-1zM114 100h1v1h-1zM114 312h1v1h-1zM114 378h1v1h-1zM114 383h1v1h-1zM114 389h1v1h-1zM115 92h1v1h-1zM115 319h1v1h-1zM115 382h1v1h-1zM115 387h1v2h-1zM362 92h1v1h-1zM362 97h1v1h-1zM362 385h1v1h-1zM362 390h1v1h-1zM367 92h1v1h-1zM367 96h1v2h-1zM367 101h1v1h-1zM367 174h1v3h-1zM367 375h1v1h-1zM367 381h1v1h-1zM361 93h1v1h-1zM361 98h1v1h-1zM361 161h1v1h-1zM361 384h1v1h-1zM361 389h1v1h-1zM366 93h1v1h-1zM366 98h1v1h-1zM366 102h1v1h-1zM366 177h1v3h-1zM366 380h1v1h-1zM108 94h1v1h-1zM108 99h1v2h-1zM108 104h1v1h-1zM108 380h1v1h-1zM360 94h1v2h-1zM360 383h1v1h-1zM360 387h1v2h-1zM365 94h1v1h-1zM365 99h1v1h-1zM365 158h1v1h-1zM365 180h1v2h-1zM365 379h1v1h-1zM365 388h1v1h-1zM369 94h1v1h-1zM369 99h1v1h-1zM369 155h1v1h-1zM369 373h1v1h-1zM369 377h1v1h-1zM369 383h1v1h-1zM109 95h1v1h-1zM109 101h1v1h-1zM109 105h1v1h-1zM109 323h1v1h-1zM109 379h1v1h-1zM109 384h1v1h-1zM368 95h1v1h-1zM368 100h1v1h-1zM368 172h1v2h-1zM368 376h1v1h-1zM368 382h1v1h-1zM110 96h1v1h-1zM110 102h1v1h-1zM110 378h1v1h-1zM110 383h1v1h-1zM372 96h1v1h-1zM372 106h1v1h-1zM372 372h1v1h-1zM372 376h1v1h-1zM372 381h1v1h-1zM106 97h1v1h-1zM106 102h1v1h-1zM106 106h1v1h-1zM106 372h1v1h-1zM106 382h1v1h-1zM111 97h1v1h-1zM111 103h1v1h-1zM111 321h1v1h-1zM111 377h1v1h-1zM111 381h1v2h-1zM111 386h1v1h-1zM371 97h1v1h-1zM371 107h1v1h-1zM371 154h1v1h-1zM371 371h1v1h-1zM371 375h1v1h-1zM371 380h1v1h-1zM107 98h1v1h-1zM107 103h1v1h-1zM107 107h1v1h-1zM107 371h1v1h-1zM107 381h1v1h-1zM112 98h1v1h-1zM112 376h1v1h-1zM112 380h1v1h-1zM112 385h1v1h-1zM370 98h1v1h-1zM370 374h1v1h-1zM370 378h1v2h-1zM370 384h1v1h-1zM103 99h1v1h-1zM103 103h1v1h-1zM103 326h1v1h-1zM103 367h1v1h-1zM103 371h1v1h-1zM103 375h1v1h-1zM104 100h1v1h-1zM104 104h1v1h-1zM104 370h1v1h-1zM104 374h1v1h-1zM101 101h1v1h-1zM101 111h1v1h-1zM101 328h1v1h-1zM101 369h1v1h-1zM101 373h1v1h-1zM101 377h1v1h-1zM105 101h1v1h-1zM105 105h1v1h-1zM105 325h1v1h-1zM105 369h1v1h-1zM105 373h1v1h-1zM377 101h1v1h-1zM377 105h1v1h-1zM377 109h1v1h-1zM377 150h1v1h-1zM377 367h1v1h-1zM377 377h1v1h-1zM102 102h1v1h-1zM102 112h1v1h-1zM102 368h1v1h-1zM102 372h1v1h-1zM102 376h1v1h-1zM376 102h1v1h-1zM376 106h1v1h-1zM376 110h1v1h-1zM376 366h1v1h-1zM376 376h1v1h-1zM211 103h1v1h-1zM211 105h1v1h-1zM211 107h1v1h-1zM211 257h1v1h-1zM211 281h1v1h-1zM331 103h1v1h-1zM331 333h1v1h-1zM331 403h1v2h-1zM331 411h1v1h-1zM375 103h1v1h-1zM375 107h1v1h-1zM375 111h1v1h-1zM375 152h1v1h-1zM375 375h1v1h-1zM375 379h1v1h-1zM379 103h1v1h-1zM379 113h1v1h-1zM379 149h1v1h-1zM379 365h1v1h-1zM379 369h1v1h-1zM374 104h1v1h-1zM374 108h1v1h-1zM374 374h1v1h-1zM374 378h1v1h-1zM378 104h1v1h-1zM378 114h1v1h-1zM378 364h1v1h-1zM378 368h1v1h-1zM373 105h1v1h-1zM373 109h1v1h-1zM373 373h1v1h-1zM373 377h1v1h-1zM96 106h1v1h-1zM96 115h1v1h-1zM96 119h1v1h-1zM96 359h1v1h-1zM96 368h1v1h-1zM381 106h1v1h-1zM381 111h1v1h-1zM381 362h1v1h-1zM381 371h1v1h-1zM97 107h1v1h-1zM97 116h1v1h-1zM97 367h1v1h-1zM97 372h1v1h-1zM380 107h1v1h-1zM380 112h1v1h-1zM380 361h1v1h-1zM380 366h1v1h-1zM380 370h1v1h-1zM98 108h1v1h-1zM98 112h1v1h-1zM98 117h1v1h-1zM98 366h1v1h-1zM98 371h1v1h-1zM378 108h2v1h-2zM384 108h1v1h-1zM384 117h1v1h-1zM384 121h1v1h-1zM384 365h1v1h-1zM384 369h1v1h-1zM94 109h1v1h-1zM94 113h1v1h-1zM94 357h1v1h-1zM94 361h1v1h-1zM94 370h1v1h-1zM99 109h1v1h-1zM99 113h1v1h-1zM99 329h1v1h-1zM99 365h1v1h-1zM99 375h1v1h-1zM383 109h1v1h-1zM383 118h1v1h-1zM383 364h1v1h-1zM383 368h1v1h-1zM95 110h1v1h-1zM95 114h1v1h-1zM95 360h1v1h-1zM95 369h1v1h-1zM100 110h1v1h-1zM100 114h1v1h-1zM100 364h1v1h-1zM100 374h1v1h-1zM382 110h1v1h-1zM382 119h1v1h-1zM382 359h1v1h-1zM382 363h1v1h-1zM382 372h1v1h-1zM92 111h1v1h-1zM92 116h1v1h-1zM92 359h1v1h-1zM92 363h1v1h-1zM96 111h2v1h-2zM93 112h1v1h-1zM93 117h1v1h-1zM93 358h1v1h-1zM93 362h1v1h-1zM388 113h1v1h-1zM388 126h1v1h-1zM388 351h1v1h-1zM89 114h1v1h-1zM89 122h1v1h-1zM89 356h1v1h-1zM89 361h1v1h-1zM387 114h1v1h-1zM90 115h2v1h-2zM90 123h2v1h-2zM90 355h2v1h-2zM90 360h2v1h-2zM386 115h1v1h-1zM386 119h1v1h-1zM386 362h1v1h-1zM386 367h1v1h-1zM385 116h1v1h-1zM385 120h1v1h-1zM385 361h1v1h-1zM385 366h1v1h-1zM390 116h1v1h-1zM390 121h1v1h-1zM390 348h1v1h-1zM390 357h1v1h-1zM214 117h1v1h-1zM214 119h1v1h-1zM214 121h1v1h-1zM214 213h1v1h-1zM214 424h1v4h-1zM389 117h1v1h-1zM389 122h1v1h-1zM389 356h1v1h-1zM389 364h1v1h-1zM94 118h2v1h-2zM387 118h2v1h-2zM387 123h2v1h-2zM387 355h2v1h-2zM387 363h2v1h-2zM85 119h1v1h-1zM85 128h1v1h-1zM85 359h1v1h-1zM393 119h1v1h-1zM393 350h1v1h-1zM393 359h1v1h-1zM86 120h2v1h-2zM86 129h2v1h-2zM86 358h2v1h-2zM391 120h2v1h-2zM391 349h2v1h-2zM391 358h2v1h-2zM88 121h1v1h-1zM88 130h1v1h-1zM88 357h1v1h-1zM88 362h1v1h-1zM395 121h1v1h-1zM395 130h1v1h-1zM395 348h1v1h-1zM395 356h1v1h-1zM83 122h1v1h-1zM83 130h1v1h-1zM83 348h1v1h-1zM83 357h1v1h-1zM393 122h2v1h-2zM393 131h2v1h-2zM393 347h2v1h-2zM393 355h2v1h-2zM84 123h2v1h-2zM84 131h2v1h-2zM84 347h2v1h-2zM84 356h2v1h-2zM392 123h1v1h-1zM392 132h1v1h-1zM392 346h1v1h-1zM392 354h1v1h-1zM86 124h1v1h-1zM86 132h1v1h-1zM86 346h1v1h-1zM86 355h1v1h-1zM391 124h1v1h-1zM391 353h1v1h-1zM81 125h1v1h-1zM87 125h1v1h-1zM87 354h1v1h-1zM316 125h1v1h-1zM316 412h1v2h-1zM389 125h2v1h-2zM389 352h2v1h-2zM82 126h2v1h-2zM82 345h2v1h-2zM88 126h2v1h-2zM88 353h2v1h-2zM79 127h1v1h-1zM79 136h1v1h-1zM79 143h1v1h-1zM79 351h1v1h-1zM84 127h1v1h-1zM84 344h1v1h-1zM90 127h1v1h-1zM90 352h1v1h-1zM90 365h1v1h-1zM399 127h1v1h-1zM399 335h1v1h-1zM399 342h1v1h-1zM399 351h1v1h-1zM80 128h2v1h-2zM80 137h2v1h-2zM80 342h2v1h-2zM80 346h2v1h-2zM80 350h2v1h-2zM397 128h2v1h-2zM397 132h2v1h-2zM397 136h2v1h-2zM397 341h2v1h-2zM397 350h2v1h-2zM82 129h1v1h-1zM82 138h1v1h-1zM82 341h1v1h-1zM82 349h1v1h-1zM396 129h1v1h-1zM396 137h1v1h-1zM396 340h1v1h-1zM396 349h1v1h-1zM401 130h1v1h-1zM401 146h1v1h-1zM401 332h1v1h-1zM399 131h2v1h-2zM399 135h2v1h-2zM399 339h2v1h-2zM75 133h1v1h-1zM75 345h1v1h-1zM217 133h1v1h-1zM217 135h1v1h-1zM217 253h1v1h-1zM217 271h1v1h-1zM217 425h1v4h-1zM395 133h2v1h-2zM395 352h2v1h-2zM403 133h1v1h-1zM403 345h1v1h-1zM76 134h2v1h-2zM76 138h2v1h-2zM76 344h2v1h-2zM394 134h1v1h-1zM394 351h1v1h-1zM401 134h2v1h-2zM401 340h2v1h-2zM401 344h2v1h-2zM78 135h1v1h-1zM73 136h1v1h-1zM73 324h1v1h-1zM73 335h1v1h-1zM404 136h1v1h-1zM404 144h1v1h-1zM404 151h1v1h-1zM404 326h1v1h-1zM74 137h2v1h-2zM74 331h2v1h-2zM140 137h1v1h-1zM140 172h1v1h-1zM140 183h1v1h-1zM140 398h1v1h-1zM140 404h1v2h-1zM218 137h1v1h-1zM218 139h1v1h-1zM218 217h1v1h-1zM402 137h2v1h-2zM402 145h2v1h-2zM402 333h2v1h-2zM402 337h2v1h-2zM400 138h2v1h-2zM400 336h2v1h-2zM72 139h1v1h-1zM72 155h1v1h-1zM78 139h2v1h-2zM78 343h2v1h-2zM78 347h2v1h-2zM398 139h2v1h-2zM73 140h2v1h-2zM73 144h2v1h-2zM80 140h1v1h-1zM75 141h2v1h-2zM75 145h2v1h-2zM75 333h2v1h-2zM75 341h2v1h-2zM219 141h1v1h-1zM219 143h1v1h-1zM219 145h1v1h-1zM219 252h1v1h-1zM219 269h1v1h-1zM219 429h1v5h-1zM408 141h1v1h-1zM408 336h1v1h-1zM70 142h1v1h-1zM70 337h1v1h-1zM77 142h2v1h-2zM77 340h2v1h-2zM406 142h2v1h-2zM406 153h2v1h-2zM406 335h2v1h-2zM71 143h2v1h-2zM71 325h2v1h-2zM71 336h2v1h-2zM405 143h1v1h-1zM405 154h1v1h-1zM405 342h1v1h-1zM409 144h2v1h-2zM409 148h2v1h-2zM409 325h2v1h-2zM409 329h2v1h-2zM407 145h2v1h-2zM407 149h2v1h-2zM407 324h2v1h-2zM407 328h2v1h-2zM77 146h1v1h-1zM77 332h1v1h-1zM77 348h1v1h-1zM405 146h2v1h-2zM405 150h2v1h-2zM405 327h2v1h-2zM220 147h1v1h-1zM220 149h1v1h-1zM220 219h1v1h-1zM220 267h1v1h-1zM220 425h1v4h-1zM301 147h1v1h-1zM301 199h1v1h-1zM301 303h1v1h-1zM301 418h1v4h-1zM403 147h2v1h-2zM403 341h2v1h-2zM411 147h1v1h-1zM411 330h1v1h-1zM67 148h1v1h-1zM67 331h1v1h-1zM402 148h1v1h-1zM68 149h2v1h-2zM68 153h2v1h-2zM68 330h2v1h-2zM68 334h2v1h-2zM300 149h1v1h-1zM300 416h1v2h-1zM70 150h2v1h-2zM70 154h2v1h-2zM70 329h2v1h-2zM70 333h2v1h-2zM412 150h2v1h-2zM412 162h2v1h-2zM412 169h2v1h-2zM412 319h2v1h-2zM412 323h2v1h-2zM65 151h1v1h-1zM72 151h2v1h-2zM72 328h2v1h-2zM72 332h2v1h-2zM221 151h1v1h-1zM221 153h1v1h-1zM221 155h1v1h-1zM221 221h1v1h-1zM221 251h1v1h-1zM221 265h1v1h-1zM410 151h2v1h-2zM410 159h2v1h-2zM410 163h2v1h-2zM410 318h2v1h-2zM410 322h2v1h-2zM66 152h2v1h-2zM66 166h2v1h-2zM66 312h2v1h-2zM74 152h1v1h-1zM74 327h1v1h-1zM74 334h1v1h-1zM74 342h1v1h-1zM408 152h2v1h-2zM408 321h2v1h-2zM155 153h1v1h-1zM155 293h1v1h-1zM155 363h1v1h-1zM155 406h1v1h-1zM155 412h1v2h-1zM64 154h1v1h-1zM65 155h2v1h-2zM65 159h2v1h-2zM65 309h2v1h-2zM65 316h2v1h-2zM65 328h2v1h-2zM67 156h2v1h-2zM67 160h2v1h-2zM67 315h2v1h-2zM67 319h2v1h-2zM67 327h2v1h-2zM62 157h1v1h-1zM69 157h2v1h-2zM69 326h2v1h-2zM415 157h2v1h-2zM415 175h2v1h-2zM415 302h2v1h-2zM415 310h2v1h-2zM63 158h2v1h-2zM63 173h2v1h-2zM63 310h2v1h-2zM63 317h2v1h-2zM71 158h1v1h-1zM412 158h3v1h-3zM409 160h1v1h-1zM409 317h1v1h-1zM416 160h2v1h-2zM416 178h2v1h-2zM416 306h2v1h-2zM69 161h1v1h-1zM69 318h1v1h-1zM414 161h2v1h-2zM414 168h2v1h-2zM414 305h2v1h-2zM414 320h2v1h-2zM59 163h2v1h-2zM59 171h2v1h-2zM59 185h2v1h-2zM59 294h2v1h-2zM59 315h2v1h-2zM418 163h2v1h-2zM418 184h2v1h-2zM418 293h2v1h-2zM418 307h2v1h-2zM418 315h2v1h-2zM61 164h3v1h-3zM61 314h3v1h-3zM415 164h3v1h-3zM415 314h3v1h-3zM64 165h2v1h-2zM64 169h2v1h-2zM64 313h2v1h-2zM224 165h1v1h-1zM224 167h1v1h-1zM224 169h1v1h-1zM224 261h1v1h-1zM413 165h2v1h-2zM413 309h2v1h-2zM413 313h2v1h-2zM58 166h2v1h-2zM58 181h2v1h-2zM58 188h2v1h-2zM58 305h2v1h-2zM58 312h2v1h-2zM411 166h2v1h-2zM411 312h2v1h-2zM411 326h2v1h-2zM419 166h2v1h-2zM419 173h2v1h-2zM419 290h2v1h-2zM419 297h2v1h-2zM419 312h2v1h-2zM60 167h2v1h-2zM60 175h2v1h-2zM60 182h2v1h-2zM60 297h2v1h-2zM60 304h2v1h-2zM416 167h3v1h-3zM62 168h2v1h-2zM62 176h2v1h-2zM62 303h2v1h-2zM62 321h2v1h-2zM171 169h1v1h-1zM171 283h1v1h-1zM171 418h1v2h-1zM286 169h1v1h-1zM286 287h1v1h-1zM286 426h1v3h-1zM57 170h2v1h-2zM57 191h2v1h-2zM57 284h2v1h-2zM57 287h2v1h-2zM66 170h1v1h-1zM111 170h4v1h-4zM115 171h4v1h-4zM225 171h1v1h-1zM225 173h1v1h-1zM225 225h1v1h-1zM225 248h1v1h-1zM285 171h1v1h-1zM285 209h1v1h-1zM285 422h1v4h-1zM61 172h2v1h-2zM61 300h2v1h-2zM61 318h2v1h-2zM421 172h2v1h-2zM421 197h2v1h-2zM421 280h2v1h-2zM56 173h1v1h-1zM283 173h1v1h-1zM283 211h1v1h-1zM283 427h1v3h-1zM57 174h3v1h-3zM417 174h2v1h-2zM417 181h2v1h-2zM417 296h2v1h-2zM417 303h2v1h-2zM417 311h2v1h-2zM422 176h2v1h-2zM422 277h2v1h-2zM418 177h4v1h-4zM54 179h1v1h-1zM423 179h2v1h-2zM423 207h2v1h-2zM423 274h2v1h-2zM55 180h3v1h-3zM419 180h4v1h-4zM227 181h1v1h-1zM227 183h1v1h-1zM227 227h1v1h-1zM227 247h1v1h-1zM227 257h1v1h-1zM424 182h2v1h-2zM424 295h2v1h-2zM53 183h2v1h-2zM53 296h2v1h-2zM420 183h4v1h-4zM420 294h4v1h-4zM55 184h4v1h-4zM55 295h4v1h-4zM186 185h1v1h-1zM186 317h1v1h-1zM186 425h1v2h-1zM228 185h1v1h-1zM228 187h1v1h-1zM228 255h1v1h-1zM52 186h2v1h-2zM54 187h4v1h-4zM51 189h2v1h-2zM51 289h2v1h-2zM273 189h1v1h-1zM273 217h1v1h-1zM273 401h1v1h-1zM273 429h1v3h-1zM426 189h2v1h-2zM426 289h2v1h-2zM53 190h4v1h-4zM53 278h4v1h-4zM53 285h4v1h-4zM53 288h4v1h-4zM422 190h4v1h-4zM422 193h4v1h-4zM422 200h4v1h-4zM422 288h4v1h-4zM420 191h2v1h-2zM420 194h2v1h-2zM420 287h2v1h-2zM420 308h2v1h-2zM426 192h3v1h-3zM426 223h3v1h-3zM270 193h1v1h-1zM270 271h1v1h-1zM270 387h1v1h-1zM270 389h1v1h-1zM230 195h1v1h-1zM230 197h1v1h-1zM230 253h1v1h-1zM230 364h1v1h-1zM230 366h1v1h-1zM230 368h1v1h-1zM230 378h1v3h-1zM230 426h1v9h-1zM269 195h1v1h-1zM269 220h1v1h-1zM269 381h1v1h-1zM269 383h1v1h-1zM269 385h1v1h-1zM269 428h1v5h-1zM427 195h3v1h-3zM427 282h3v1h-3zM49 196h3v1h-3zM49 283h3v1h-3zM423 196h4v1h-4zM423 271h4v1h-4zM423 281h4v1h-4zM52 197h4v1h-4zM52 207h4v1h-4zM52 282h4v1h-4zM198 197h1v1h-1zM198 421h1v2h-1zM267 197h1v1h-1zM267 221h1v1h-1zM267 371h1v1h-1zM267 373h1v1h-1zM267 375h1v1h-1zM56 198h2v1h-2zM56 281h2v1h-2zM56 306h2v1h-2zM48 199h3v1h-3zM231 199h1v1h-1zM231 201h1v1h-1zM231 203h1v1h-1zM231 231h1v1h-1zM231 244h1v1h-1zM231 251h1v1h-1zM231 356h1v1h-1zM231 358h1v1h-1zM231 360h1v1h-1zM231 362h1v1h-1zM266 199h1v1h-1zM266 267h1v1h-1zM266 367h1v1h-1zM266 369h1v1h-1zM266 428h1v5h-1zM426 199h5v1h-5zM51 200h4v1h-4zM51 214h4v1h-4zM51 265h4v1h-4zM51 268h4v1h-4zM55 201h2v1h-2zM55 302h2v1h-2zM47 202h3v1h-3zM47 273h3v1h-3zM50 203h4v1h-4zM50 217h4v1h-4zM50 220h4v1h-4zM50 262h4v1h-4zM50 272h4v1h-4zM204 203h1v1h-1zM204 291h1v1h-1zM204 423h1v2h-1zM263 203h1v1h-1zM263 224h1v1h-1zM263 353h1v1h-1zM263 355h1v1h-1zM263 429h1v4h-1zM54 204h2v1h-2zM54 271h2v1h-2zM54 299h2v1h-2zM429 205h3v1h-3zM429 276h3v1h-3zM47 206h5v1h-5zM425 206h4v1h-4zM425 216h4v1h-4zM425 258h4v1h-4zM425 261h4v1h-4zM425 275h4v1h-4zM428 209h5v1h-5zM428 212h5v1h-5zM428 265h5v1h-5zM424 210h4v1h-4zM424 213h4v1h-4zM424 264h4v1h-4zM424 278h4v1h-4zM46 213h5v1h-5zM46 266h5v1h-5zM46 269h5v1h-5zM234 213h1v1h-1zM234 215h1v1h-1zM234 217h1v1h-1zM234 247h1v1h-1zM257 213h1v1h-1zM257 227h1v1h-1zM257 257h1v1h-1zM257 323h1v1h-1zM257 325h1v1h-1zM257 327h1v1h-1zM429 215h4v1h-4zM45 216h5v1h-5zM45 219h5v1h-5zM45 256h5v1h-5zM254 217h1v1h-1zM254 309h1v1h-1zM254 311h1v1h-1zM254 313h1v1h-1zM235 219h1v1h-1zM235 221h1v1h-1zM235 235h1v1h-1zM235 242h1v1h-1zM235 245h1v1h-1zM252 219h1v1h-1zM252 299h1v1h-1zM252 301h1v1h-1zM252 303h1v1h-1zM252 426h1v9h-1zM251 221h1v1h-1zM251 231h1v1h-1zM251 251h1v1h-1zM251 295h1v1h-1zM251 297h1v1h-1zM429 222h5v1h-5zM429 259h5v1h-5zM429 262h5v1h-5zM44 223h10v1h-10zM236 223h1v1h-1zM236 225h1v1h-1zM236 227h1v1h-1zM236 243h1v1h-1zM236 430h1v5h-1zM250 223h1v1h-1zM250 291h1v1h-1zM250 293h1v1h-1zM426 226h9v1h-9zM426 229h9v1h-9zM426 239h9v1h-9zM426 245h9v1h-9zM426 248h9v1h-9zM247 227h1v1h-1zM247 234h1v1h-1zM247 247h1v1h-1zM247 275h1v1h-1zM247 277h1v1h-1zM247 279h1v1h-1zM237 229h1v1h-1zM237 231h1v1h-1zM237 237h1v1h-1zM237 240h1v1h-1zM237 426h1v4h-1zM246 229h1v1h-1zM246 271h1v1h-1zM246 273h1v1h-1zM246 430h1v5h-1zM44 230h9v1h-9zM44 233h9v1h-9zM44 239h9v1h-9zM44 249h9v1h-9zM44 252h9v1h-9zM253 230h1v1h-1zM253 253h1v1h-1zM253 305h1v1h-1zM253 307h1v1h-1zM244 231h1v1h-1zM244 261h1v1h-1zM244 263h1v1h-1zM244 265h1v1h-1zM430 232h5v1h-5zM430 242h5v1h-5zM238 233h1v1h-1zM238 235h1v1h-1zM243 233h1v1h-1zM243 236h1v1h-1zM243 243h1v1h-1zM243 257h1v1h-1zM243 259h1v1h-1zM249 233h1v1h-1zM249 249h1v1h-1zM249 285h1v1h-1zM249 287h1v1h-1zM249 289h1v1h-1zM249 426h1v9h-1zM426 233h4v1h-4zM426 241h4v1h-4zM44 236h5v1h-5zM44 246h5v1h-5zM49 237h4v1h-4zM49 245h4v1h-4zM239 237h2v1h-2zM238 241h2v1h-2zM240 243h1v1h-1zM240 245h1v1h-1zM50 255h3v1h-3zM50 286h3v1h-3zM425 255h10v1h-10zM260 261h1v1h-1zM260 339h1v1h-1zM260 341h1v1h-1zM203 262h1v1h-1zM203 293h1v1h-1zM203 425h1v4h-1zM46 263h4v1h-4zM201 263h1v1h-1zM201 295h1v1h-1zM201 422h1v2h-1zM268 269h1v1h-1zM268 377h1v1h-1zM268 379h1v1h-1zM268 424h1v4h-1zM187 272h1v1h-1zM187 421h1v4h-1zM427 272h5v1h-5zM185 274h1v1h-1zM185 319h1v1h-1zM185 418h1v2h-1zM48 279h5v1h-5zM428 279h3v1h-3zM284 285h1v1h-1zM284 420h1v2h-1zM421 291h4v1h-4zM425 292h2v1h-2zM56 298h4v1h-4zM421 298h3v1h-3zM424 299h1v1h-1zM57 301h4v1h-4zM419 304h3v1h-3zM422 305h1v1h-1zM412 308h1v1h-1zM117 310h2v1h-2zM60 311h3v1h-3zM115 311h2v1h-2zM188 315h1v1h-1zM188 419h1v2h-1zM256 319h1v1h-1zM256 321h1v1h-1zM256 429h1v5h-1zM64 320h3v1h-3zM407 320h1v1h-1zM416 321h1v1h-1zM406 323h1v1h-1zM406 339h1v1h-1zM414 324h1v1h-1zM413 327h1v1h-1zM76 330h1v1h-1zM404 334h2v1h-2zM404 338h2v1h-2zM398 338h1v1h-1zM79 339h2v1h-2zM170 341h1v1h-1zM170 412h1v1h-1zM170 420h1v2h-1zM400 343h1v1h-1zM397 353h1v1h-1zM383 360h2v1h-2zM91 364h1v1h-1zM381 367h2v1h-2zM99 370h2v1h-2zM156 410h1v2h-1zM202 429h1v3h-1z"/><path fill="#00ffff" d="M235 141h1v1h-1zM234 142h1v1h-1zM236 142h2v1h-2zM231 143h1v1h-1zM238 143h2v1h-2zM230 144h1v1h-1zM240 144h2v1h-2zM242 145h2v1h-2zM227 146h1v1h-1zM244 146h2v1h-2zM226 147h1v1h-1zM246 147h2v1h-2zM223 148h1v1h-1zM248 148h2v1h-2zM222 149h1v1h-1zM250 149h2v1h-2zM252 150h2v1h-2zM218 151h2v1h-2zM254 151h2v1h-2zM256 152h1v1h-1zM215 153h1v1h-1zM257 153h2v1h-2zM214 154h1v1h-1zM259 154h2v1h-2zM261 155h2v1h-2zM210 156h2v1h-2zM263 156h2v1h-2zM265 157h2v1h-2zM207 158h1v1h-1zM267 158h2v1h-2zM206 159h1v1h-1zM269 159h2v1h-2zM271 160h2v1h-2zM202 161h2v1h-2zM273 161h2v1h-2zM275 162h2v1h-2zM199 163h1v1h-1zM277 163h2v1h-2zM198 164h1v1h-1zM278 164h2v1h-2zM280 165h2v1h-2zM194 166h2v1h-2zM282 166h2v1h-2zM284 167h2v1h-2zM191 168h1v1h-1zM286 168h2v1h-2zM190 169h1v1h-1zM288 169h2v1h-2zM290 170h2v1h-2zM186 171h2v1h-2zM292 171h2v1h-2zM294 172h2v1h-2zM183 173h1v1h-1zM296 173h2v1h-2zM182 174h1v1h-1zM298 174h2v1h-2zM300 175h1v1h-1zM178 176h2v1h-2zM301 176h2v1h-2zM303 177h2v1h-2zM175 178h1v1h-1zM305 178h2v1h-2zM174 179h1v1h-1zM307 179h2v1h-2zM309 180h2v1h-2zM170 181h2v1h-2zM311 181h2v1h-2zM313 182h2v1h-2zM167 183h1v1h-1zM315 183h2v1h-2zM166 184h1v1h-1zM317 184h2v1h-2zM163 185h1v1h-1zM319 185h2v1h-2zM162 186h1v1h-1zM158 189h1v1h-1zM155 190h1v1h-1zM155 240h1v48h-1zM154 191h1v49h-1z"/><path fill="#00ff00" d="M205 25h1v1h-1zM205 30h1v1h-1zM205 196h1v2h-1zM205 280h1v2h-1zM211 25h1v1h-1zM211 30h1v1h-1zM211 185h1v1h-1zM211 292h1v2h-1zM206 26h1v2h-1zM206 29h1v1h-1zM206 282h1v2h-1zM210 26h1v2h-1zM210 29h1v1h-1zM210 290h1v2h-1zM177 27h1v1h-1zM177 37h1v1h-1zM177 69h1v2h-1zM177 72h1v1h-1zM177 223h1v2h-1zM177 248h1v1h-1zM183 27h1v1h-1zM183 37h1v1h-1zM183 235h1v2h-1zM189 27h1v1h-1zM189 37h1v1h-1zM189 225h1v1h-1zM189 247h1v2h-1zM208 27h1v1h-1zM208 29h1v2h-1zM208 33h1v1h-1zM208 286h1v2h-1zM176 28h1v2h-1zM176 38h1v2h-1zM176 68h1v1h-1zM176 73h1v1h-1zM176 186h1v1h-1zM176 221h1v2h-1zM176 249h1v1h-1zM182 28h1v2h-1zM182 38h1v2h-1zM182 68h1v1h-1zM182 73h1v1h-1zM182 187h1v1h-1zM182 233h1v2h-1zM188 28h1v2h-1zM188 38h1v2h-1zM188 187h1v1h-1zM188 228h1v1h-1zM188 245h1v2h-1zM206 28h5v1h-5zM178 29h1v3h-1zM178 39h1v3h-1zM178 75h1v1h-1zM178 187h1v1h-1zM178 225h1v2h-1zM178 245h1v1h-1zM184 29h1v3h-1zM184 39h1v3h-1zM184 187h1v1h-1zM184 238h1v1h-1zM175 30h1v1h-1zM175 40h1v1h-1zM175 219h1v2h-1zM175 252h1v1h-1zM181 30h1v1h-1zM181 40h1v1h-1zM181 69h1v2h-1zM181 72h1v1h-1zM181 231h1v2h-1zM181 240h1v2h-1zM187 30h1v1h-1zM187 40h1v1h-1zM187 229h1v1h-1zM187 243h1v2h-1zM174 31h1v2h-1zM174 41h1v2h-1zM174 186h1v1h-1zM174 217h1v2h-1zM174 253h1v1h-1zM180 31h1v1h-1zM180 41h1v1h-1zM180 75h1v1h-1zM180 187h1v1h-1zM180 229h1v2h-1zM186 31h1v1h-1zM186 41h1v1h-1zM186 187h1v1h-1zM186 241h1v2h-1zM207 31h3v1h-3zM179 32h2v1h-2zM179 42h2v1h-2zM185 32h2v1h-2zM185 42h2v1h-2zM185 190h2v1h-2zM207 32h1v1h-1zM207 192h1v2h-1zM207 284h1v2h-1zM209 32h1v1h-1zM209 188h1v1h-1zM209 288h1v2h-1zM173 33h1v1h-1zM173 43h1v1h-1zM173 215h1v2h-1zM179 33h1v1h-1zM179 43h1v1h-1zM179 70h1v1h-1zM179 72h1v2h-1zM179 76h1v1h-1zM179 227h1v2h-1zM179 244h1v1h-1zM185 33h1v1h-1zM185 43h1v1h-1zM185 232h1v2h-1zM185 239h1v2h-1zM177 71h5v1h-5zM178 74h3v1h-3zM233 144h1v2h-1zM233 337h1v1h-1zM231 148h1v2h-1zM231 332h1v2h-1zM229 152h1v1h-1zM229 328h1v2h-1zM228 153h1v1h-1zM228 190h1v1h-1zM228 326h1v2h-1zM227 156h1v1h-1zM227 324h1v2h-1zM226 157h1v1h-1zM226 190h1v1h-1zM226 322h1v2h-1zM373 159h1v1h-1zM373 163h1v5h-1zM373 401h1v1h-1zM373 403h1v3h-1zM381 159h1v1h-1zM381 163h1v5h-1zM225 160h1v1h-1zM225 320h1v2h-1zM374 160h1v1h-1zM374 162h1v1h-1zM374 168h1v1h-1zM380 160h1v1h-1zM380 162h1v1h-1zM380 168h1v1h-1zM224 161h1v1h-1zM224 190h1v1h-1zM224 318h1v2h-1zM375 161h5v1h-5zM375 169h5v1h-5zM222 164h1v2h-1zM222 190h1v1h-1zM222 314h1v2h-1zM220 168h1v2h-1zM220 190h1v1h-1zM220 310h1v2h-1zM377 170h1v3h-1zM377 174h1v2h-1zM218 172h1v2h-1zM218 190h1v1h-1zM218 306h1v2h-1zM345 173h1v1h-1zM345 177h1v5h-1zM353 173h1v1h-1zM353 177h1v5h-1zM373 173h9v1h-9zM346 174h1v1h-1zM346 176h1v1h-1zM346 182h1v1h-1zM352 174h1v1h-1zM352 176h1v1h-1zM352 182h1v1h-1zM347 175h5v1h-5zM347 183h5v1h-5zM216 176h1v1h-1zM216 302h1v2h-1zM215 177h1v1h-1zM215 300h1v2h-1zM214 180h1v1h-1zM214 298h1v2h-1zM213 181h1v1h-1zM213 296h1v2h-1zM361 182h1v1h-1zM361 184h1v1h-1zM360 183h3v1h-3zM212 184h1v1h-1zM212 294h1v2h-1zM349 184h1v3h-1zM349 188h1v2h-1zM158 185h1v2h-1zM160 185h1v1h-1zM160 189h1v2h-1zM162 185h1v1h-1zM162 193h1v2h-1zM162 276h1v1h-1zM164 185h1v1h-1zM164 197h1v2h-1zM164 272h1v1h-1zM166 186h1v1h-1zM166 201h1v2h-1zM166 268h1v1h-1zM168 186h1v1h-1zM168 205h1v2h-1zM168 264h1v2h-1zM170 186h1v1h-1zM170 209h1v2h-1zM170 260h1v2h-1zM172 186h1v1h-1zM172 213h1v2h-1zM172 256h1v2h-1zM305 186h2v1h-2zM309 186h2v1h-2zM313 186h2v1h-2zM317 186h2v1h-2zM159 187h1v2h-1zM159 280h1v2h-1zM190 187h1v1h-1zM190 224h1v1h-1zM190 249h1v2h-1zM273 187h2v1h-2zM277 187h2v1h-2zM281 187h2v1h-2zM285 187h2v1h-2zM289 187h2v1h-2zM293 187h2v1h-2zM297 187h2v1h-2zM301 187h2v1h-2zM345 187h9v1h-9zM192 188h1v1h-1zM192 220h1v1h-1zM192 253h1v2h-1zM194 188h1v1h-1zM194 216h1v2h-1zM194 257h1v2h-1zM196 188h1v1h-1zM196 212h1v2h-1zM196 262h1v2h-1zM198 188h1v1h-1zM198 209h1v1h-1zM198 266h1v2h-1zM200 188h1v1h-1zM200 205h1v1h-1zM200 270h1v2h-1zM202 188h1v1h-1zM202 201h1v1h-1zM202 274h1v2h-1zM238 188h1v1h-1zM238 191h1v1h-1zM238 329h1v2h-1zM241 188h2v1h-2zM245 188h2v1h-2zM249 188h2v1h-2zM253 188h2v1h-2zM257 188h2v1h-2zM261 188h2v1h-2zM265 188h2v1h-2zM269 188h2v1h-2zM204 189h3v1h-3zM208 189h3v1h-3zM212 189h3v1h-3zM216 189h3v1h-3zM221 189h2v1h-2zM225 189h2v1h-2zM229 189h2v1h-2zM233 189h2v1h-2zM233 336h2v1h-2zM237 189h1v1h-1zM237 331h1v1h-1zM173 190h2v1h-2zM177 190h2v1h-2zM181 190h2v1h-2zM189 190h2v1h-2zM193 190h2v1h-2zM197 190h2v1h-2zM201 190h2v1h-2zM157 191h2v1h-2zM161 191h2v1h-2zM165 191h2v1h-2zM169 191h2v1h-2zM230 191h1v1h-1zM230 330h1v2h-1zM232 191h1v1h-1zM232 334h1v2h-1zM234 191h1v1h-1zM234 335h1v1h-1zM236 191h1v1h-1zM236 332h1v2h-1zM240 191h1v1h-1zM240 327h1v1h-1zM242 191h1v1h-1zM242 324h1v1h-1zM161 192h1v1h-1zM161 277h1v1h-1zM244 192h1v1h-1zM244 321h1v1h-1zM246 192h1v1h-1zM246 318h1v1h-1zM248 192h1v1h-1zM248 315h1v1h-1zM250 192h1v1h-1zM250 312h1v1h-1zM252 192h1v1h-1zM252 309h1v1h-1zM254 192h1v1h-1zM254 306h1v2h-1zM256 192h1v1h-1zM256 303h1v2h-1zM258 193h1v1h-1zM258 300h1v2h-1zM260 193h1v1h-1zM260 297h1v2h-1zM262 193h1v1h-1zM262 294h1v2h-1zM264 193h1v1h-1zM264 291h1v2h-1zM266 193h1v1h-1zM266 288h1v2h-1zM268 193h1v1h-1zM268 286h1v1h-1zM270 194h1v1h-1zM270 283h1v1h-1zM272 194h1v1h-1zM272 280h1v1h-1zM274 194h1v1h-1zM274 277h1v1h-1zM276 194h1v1h-1zM276 274h1v1h-1zM278 194h1v1h-1zM278 271h1v1h-1zM280 194h1v1h-1zM280 268h1v1h-1zM282 194h1v1h-1zM282 265h1v2h-1zM163 195h1v2h-1zM163 273h1v1h-1zM284 195h1v1h-1zM284 262h1v2h-1zM286 195h1v1h-1zM286 259h1v2h-1zM288 195h1v1h-1zM288 256h1v2h-1zM290 195h1v1h-1zM290 253h1v2h-1zM292 195h1v1h-1zM292 250h1v2h-1zM294 195h1v1h-1zM294 248h1v1h-1zM332 195h1v1h-1zM332 197h1v1h-1zM296 196h1v1h-1zM296 245h1v1h-1zM298 196h1v1h-1zM298 242h1v1h-1zM300 196h1v1h-1zM300 239h1v1h-1zM302 196h1v1h-1zM302 236h1v1h-1zM304 196h1v1h-1zM304 233h1v1h-1zM306 196h1v1h-1zM306 230h1v1h-1zM308 196h1v1h-1zM308 227h1v1h-1zM331 196h3v1h-3zM310 197h1v1h-1zM310 224h1v2h-1zM312 197h1v1h-1zM312 221h1v2h-1zM314 197h1v1h-1zM314 218h1v2h-1zM316 197h1v1h-1zM316 215h1v2h-1zM318 197h1v1h-1zM318 212h1v2h-1zM320 197h1v1h-1zM320 209h1v2h-1zM322 198h1v1h-1zM322 207h1v1h-1zM324 198h1v1h-1zM324 204h1v1h-1zM326 198h1v1h-1zM326 201h1v1h-1zM165 199h1v2h-1zM165 269h1v1h-1zM327 199h1v2h-1zM203 200h1v1h-1zM203 276h1v2h-1zM325 202h1v2h-1zM167 203h1v2h-1zM201 204h1v1h-1zM201 272h1v2h-1zM323 205h1v2h-1zM624 206h1v1h-1zM624 214h1v1h-1zM624 289h1v1h-1zM624 294h1v1h-1zM631 206h1v1h-1zM631 214h1v1h-1zM631 287h1v1h-1zM631 292h1v1h-1zM631 386h1v1h-1zM631 391h1v1h-1zM169 207h1v2h-1zM625 207h6v1h-6zM625 213h6v1h-6zM199 208h1v1h-1zM199 268h1v2h-1zM321 208h1v1h-1zM626 208h1v5h-1zM626 249h1v2h-1zM626 286h1v1h-1zM626 291h1v1h-1zM626 336h1v1h-1zM626 338h1v3h-1zM626 387h1v2h-1zM626 390h1v1h-1zM629 208h1v5h-1zM629 286h1v1h-1zM629 291h1v1h-1zM629 393h1v1h-1zM171 211h1v2h-1zM319 211h1v1h-1zM317 214h1v1h-1zM315 217h1v1h-1zM313 220h1v1h-1zM191 221h1v1h-1zM191 251h1v2h-1zM311 223h1v1h-1zM309 226h1v1h-1zM307 228h1v2h-1zM305 231h1v2h-1zM303 234h1v2h-1zM183 237h2v1h-2zM301 237h1v2h-1zM299 240h1v2h-1zM297 243h1v2h-1zM295 246h1v2h-1zM627 248h3v1h-3zM627 337h3v1h-3zM627 341h3v1h-3zM627 392h3v1h-3zM293 249h1v1h-1zM630 249h1v2h-1zM630 289h1v1h-1zM630 294h1v1h-1zM630 336h1v1h-1zM630 338h1v3h-1zM630 387h1v2h-1zM630 390h1v1h-1zM624 251h4v1h-4zM629 251h4v1h-4zM291 252h1v1h-1zM624 253h9v1h-9zM193 255h1v2h-1zM289 255h1v1h-1zM287 258h1v1h-1zM195 259h1v2h-1zM195 261h2v1h-2zM285 261h1v1h-1zM197 264h1v2h-1zM283 264h1v1h-1zM281 267h1v1h-1zM279 269h1v2h-1zM277 272h1v2h-1zM275 275h1v2h-1zM204 278h1v2h-1zM273 278h1v2h-1zM271 281h1v2h-1zM157 284h1v2h-1zM157 391h1v1h-1zM157 393h1v3h-1zM269 284h1v2h-1zM443 286h5v1h-5zM632 286h1v1h-1zM632 291h1v1h-1zM267 287h1v1h-1zM442 287h1v1h-1zM442 291h1v1h-1zM448 287h1v1h-1zM448 291h1v1h-1zM625 287h2v1h-2zM625 292h2v1h-2zM628 287h2v1h-2zM628 292h2v1h-2zM441 288h1v3h-1zM449 288h1v3h-1zM625 288h1v1h-1zM625 293h1v1h-1zM625 386h1v1h-1zM625 391h1v1h-1zM627 288h2v1h-2zM627 293h2v1h-2zM630 288h2v1h-2zM630 293h2v1h-2zM627 289h1v1h-1zM627 294h1v1h-1zM627 393h1v1h-1zM150 290h1v1h-1zM150 292h1v1h-1zM265 290h1v1h-1zM149 291h3v1h-3zM437 292h7v1h-7zM447 292h7v1h-7zM263 293h1v1h-1zM126 294h1v1h-1zM126 304h1v1h-1zM138 294h1v1h-1zM138 304h1v1h-1zM127 295h1v1h-1zM127 303h1v1h-1zM137 295h1v1h-1zM137 303h1v1h-1zM128 296h1v4h-1zM128 301h1v2h-1zM136 296h1v4h-1zM136 301h1v2h-1zM261 296h1v1h-1zM437 296h17v1h-17zM132 298h1v2h-1zM132 301h1v5h-1zM259 299h1v1h-1zM128 300h9v1h-9zM257 302h1v1h-1zM217 304h1v2h-1zM255 305h1v1h-1zM123 306h1v1h-1zM123 308h1v1h-1zM131 306h3v1h-3zM131 310h3v1h-3zM122 307h3v1h-3zM130 307h1v3h-1zM134 307h1v3h-1zM219 308h1v2h-1zM253 308h1v1h-1zM99 310h1v1h-1zM99 320h1v1h-1zM99 385h1v1h-1zM99 399h1v1h-1zM111 310h1v1h-1zM111 320h1v1h-1zM251 310h1v2h-1zM100 311h1v1h-1zM100 319h1v1h-1zM100 384h1v1h-1zM100 400h1v1h-1zM110 311h1v1h-1zM110 319h1v1h-1zM101 312h1v4h-1zM101 317h1v2h-1zM109 312h1v4h-1zM109 317h1v2h-1zM221 312h1v2h-1zM249 313h1v2h-1zM105 314h1v2h-1zM105 317h1v5h-1zM101 316h9v1h-9zM223 316h1v2h-1zM247 316h1v2h-1zM245 319h1v2h-1zM104 322h3v1h-3zM104 326h3v1h-3zM243 322h1v2h-1zM103 323h1v3h-1zM107 323h1v3h-1zM241 325h1v2h-1zM239 328h1v1h-1zM235 334h1v1h-1zM383 335h1v1h-1zM383 337h1v3h-1zM387 335h1v1h-1zM387 337h1v3h-1zM384 336h3v1h-3zM384 340h3v1h-3zM385 341h1v1h-1zM385 343h1v1h-1zM383 342h5v1h-5zM628 342h1v1h-1zM628 344h1v1h-1zM628 388h1v1h-1zM628 390h1v2h-1zM628 394h1v1h-1zM626 343h5v1h-5zM626 389h5v1h-5zM71 367h1v1h-1zM71 369h1v3h-1zM75 367h1v1h-1zM75 369h1v3h-1zM72 368h3v1h-3zM72 372h3v1h-3zM73 373h1v1h-1zM73 375h1v1h-1zM71 374h5v1h-5zM86 384h1v1h-1zM86 400h1v1h-1zM87 385h1v1h-1zM87 399h1v1h-1zM88 386h11v1h-11zM88 398h11v1h-11zM90 387h1v11h-1zM96 387h1v11h-1zM153 391h1v1h-1zM153 393h1v3h-1zM154 392h3v1h-3zM154 396h3v1h-3zM155 397h1v1h-1zM155 399h1v1h-1zM153 398h5v1h-5zM369 401h1v1h-1zM369 403h1v3h-1zM370 402h3v1h-3zM370 406h3v1h-3zM371 407h1v1h-1zM371 409h1v1h-1zM369 408h5v1h-5z"/><path fill="#0000ff" d="M104 69h1v1h-1zM104 71h1v1h-1zM107 69h1v1h-1zM107 71h1v2h-1zM107 74h1v1h-1zM107 76h1v2h-1zM107 162h1v2h-1zM110 69h1v1h-1zM110 71h1v1h-1zM103 70h2v1h-2zM106 70h3v1h-3zM106 73h3v1h-3zM110 70h2v1h-2zM105 72h1v1h-1zM109 72h1v1h-1zM105 75h5v1h-5zM226 75h1v5h-1zM231 75h3v1h-3zM231 79h3v1h-3zM238 75h1v5h-1zM238 112h1v2h-1zM230 76h1v3h-1zM234 76h1v3h-1zM234 135h1v1h-1zM234 137h1v1h-1zM227 80h1v2h-1zM227 107h1v5h-1zM227 244h1v1h-1zM237 80h1v2h-1zM237 238h1v1h-1zM228 82h2v1h-2zM235 82h2v1h-2zM279 82h5v1h-5zM279 98h5v1h-5zM230 83h5v1h-5zM278 83h1v1h-1zM278 85h1v1h-1zM278 95h1v1h-1zM278 97h1v1h-1zM278 115h1v1h-1zM278 125h1v1h-1zM284 83h2v1h-2zM284 97h2v1h-2zM78 84h1v1h-1zM78 100h1v1h-1zM94 84h1v1h-1zM94 100h1v1h-1zM232 84h1v3h-1zM232 88h1v4h-1zM277 84h1v1h-1zM277 96h1v1h-1zM277 110h1v1h-1zM277 112h1v1h-1zM277 114h1v1h-1zM277 126h1v1h-1zM277 213h1v1h-1zM286 84h1v1h-1zM286 96h1v1h-1zM79 85h1v1h-1zM79 99h1v1h-1zM93 85h1v1h-1zM93 99h1v1h-1zM93 135h1v1h-1zM93 137h1v2h-1zM93 140h1v1h-1zM93 142h1v2h-1zM287 85h1v1h-1zM287 95h1v1h-1zM287 207h1v1h-1zM80 86h1v1h-1zM80 98h1v1h-1zM92 86h1v1h-1zM92 98h1v1h-1zM279 86h1v1h-1zM279 94h1v1h-1zM279 116h1v2h-1zM279 123h1v2h-1zM279 212h1v1h-1zM288 86h1v2h-1zM288 93h1v2h-1zM81 87h1v2h-1zM81 96h1v2h-1zM91 87h1v2h-1zM91 96h1v2h-1zM91 138h1v1h-1zM228 87h9v1h-9zM280 87h1v2h-1zM280 92h1v2h-1zM280 118h1v5h-1zM289 88h1v5h-1zM289 206h1v1h-1zM82 89h1v3h-1zM82 93h1v3h-1zM90 89h1v3h-1zM90 93h1v3h-1zM90 135h1v1h-1zM90 137h1v1h-1zM281 89h1v3h-1zM281 211h1v1h-1zM78 92h17v1h-17zM233 104h1v1h-1zM233 106h1v1h-1zM233 116h1v3h-1zM233 120h1v4h-1zM233 240h1v1h-1zM232 105h3v1h-3zM232 107h3v1h-3zM232 111h3v1h-3zM239 107h1v5h-1zM239 236h1v1h-1zM231 108h1v3h-1zM231 241h1v1h-1zM235 108h1v3h-1zM235 239h1v1h-1zM276 111h3v1h-3zM228 112h1v2h-1zM270 112h5v1h-5zM270 128h5v1h-5zM269 113h1v1h-1zM269 115h1v1h-1zM269 125h1v1h-1zM269 127h1v1h-1zM269 218h1v1h-1zM275 113h2v1h-2zM275 127h2v1h-2zM229 114h2v1h-2zM236 114h2v1h-2zM268 114h1v1h-1zM268 126h1v1h-1zM268 140h1v1h-1zM268 142h1v1h-1zM231 115h5v1h-5zM270 116h1v1h-1zM270 124h1v1h-1zM271 117h1v2h-1zM271 122h1v2h-1zM271 217h1v1h-1zM229 119h9v1h-9zM272 119h1v3h-1zM375 125h1v3h-1zM378 125h1v1h-1zM378 127h1v1h-1zM378 130h1v1h-1zM378 132h1v2h-1zM381 125h1v3h-1zM377 126h1v1h-1zM379 126h1v1h-1zM376 128h1v1h-1zM380 128h1v1h-1zM377 129h3v1h-3zM376 131h5v1h-5zM96 135h1v1h-1zM96 137h1v1h-1zM96 157h1v2h-1zM96 160h1v2h-1zM89 136h2v1h-2zM92 136h3v1h-3zM92 139h3v1h-3zM96 136h2v1h-2zM233 136h3v1h-3zM95 138h1v1h-1zM91 141h5v1h-5zM267 141h3v1h-3zM102 157h1v2h-1zM102 160h1v5h-1zM102 166h1v3h-1zM102 170h1v4h-1zM108 157h1v2h-1zM108 160h1v2h-1zM95 159h3v1h-3zM100 159h5v1h-5zM100 165h5v1h-5zM107 159h3v1h-3zM97 162h1v2h-1zM98 164h2v1h-2zM105 164h2v1h-2zM98 169h9v1h-9zM122 172h1v1h-1zM121 173h3v1h-3zM129 173h1v2h-1zM129 176h1v5h-1zM129 182h1v3h-1zM129 186h1v4h-1zM135 173h1v2h-1zM135 176h1v2h-1zM435 173h1v1h-1zM439 173h1v1h-1zM443 173h1v1h-1zM122 174h2v1h-2zM436 174h1v1h-1zM438 174h1v1h-1zM440 174h1v1h-1zM442 174h1v1h-1zM444 174h1v1h-1zM122 175h3v1h-3zM127 175h5v1h-5zM127 181h5v1h-5zM134 175h3v1h-3zM437 175h1v13h-1zM441 175h1v13h-1zM445 175h1v13h-1zM123 176h1v2h-1zM124 178h1v2h-1zM134 178h1v2h-1zM125 180h2v1h-2zM132 180h2v1h-2zM450 184h1v1h-1zM450 186h1v2h-1zM450 205h1v1h-1zM125 185h9v1h-9zM449 185h3v1h-3zM319 187h1v1h-1zM149 188h1v1h-1zM149 190h1v1h-1zM317 188h1v1h-1zM446 188h1v1h-1zM446 204h1v3h-1zM449 188h1v1h-1zM449 204h1v1h-1zM449 206h1v1h-1zM449 209h1v1h-1zM449 211h1v2h-1zM148 189h3v1h-3zM447 189h2v1h-2zM315 190h1v1h-1zM313 191h1v1h-1zM311 192h1v1h-1zM309 193h1v1h-1zM307 195h1v1h-1zM305 196h1v1h-1zM303 197h1v1h-1zM301 198h1v1h-1zM299 200h1v1h-1zM297 201h1v1h-1zM295 202h1v1h-1zM293 203h1v1h-1zM291 204h1v1h-1zM452 204h1v3h-1zM448 205h1v1h-1zM447 207h1v1h-1zM451 207h1v1h-1zM285 208h1v1h-1zM448 208h3v1h-3zM283 209h1v1h-1zM447 210h5v1h-5zM275 214h1v1h-1zM273 215h1v1h-1zM627 217h3v1h-3zM627 224h3v1h-3zM627 397h3v1h-3zM627 400h3v1h-3zM627 410h3v1h-3zM625 218h2v1h-2zM625 220h2v1h-2zM625 223h2v1h-2zM630 218h2v1h-2zM630 221h2v1h-2zM630 223h2v1h-2zM267 219h1v1h-1zM624 219h1v1h-1zM624 221h1v2h-1zM624 264h1v1h-1zM624 296h1v1h-1zM624 304h1v1h-1zM629 219h1v2h-1zM629 259h1v1h-1zM629 263h1v1h-1zM629 407h1v1h-1zM632 219h1v2h-1zM632 222h1v1h-1zM632 258h1v1h-1zM632 296h1v1h-1zM632 304h1v1h-1zM265 220h1v1h-1zM627 221h1v2h-1zM627 261h1v1h-1zM627 329h1v3h-1zM627 407h1v1h-1zM263 222h1v1h-1zM261 223h1v1h-1zM259 224h1v1h-1zM257 225h1v1h-1zM255 227h1v1h-1zM253 228h1v1h-1zM251 229h1v1h-1zM249 230h1v1h-1zM247 231h1v1h-1zM245 233h1v1h-1zM243 234h1v1h-1zM241 235h1v1h-1zM229 243h1v1h-1zM225 245h1v1h-1zM223 246h1v1h-1zM223 414h1v3h-1zM221 247h1v1h-1zM219 249h1v1h-1zM219 414h1v3h-1zM217 250h1v1h-1zM217 412h1v1h-1zM217 418h1v1h-1zM215 251h1v1h-1zM213 252h1v1h-1zM211 254h1v1h-1zM209 255h1v1h-1zM207 256h1v1h-1zM630 256h3v1h-3zM205 257h1v1h-1zM631 257h2v1h-2zM631 397h2v1h-2zM630 258h1v1h-1zM630 298h1v2h-1zM630 301h1v2h-1zM630 328h1v1h-1zM630 332h1v1h-1zM630 399h1v1h-1zM630 409h1v1h-1zM203 259h1v1h-1zM625 259h1v1h-1zM625 263h1v1h-1zM625 297h1v1h-1zM625 303h1v1h-1zM625 327h1v1h-1zM625 333h1v1h-1zM625 396h1v1h-1zM625 398h1v1h-1zM625 406h1v3h-1zM201 260h1v1h-1zM626 260h1v1h-1zM626 262h1v1h-1zM626 298h1v2h-1zM626 301h1v2h-1zM626 328h1v1h-1zM626 332h1v1h-1zM626 399h1v1h-1zM626 409h1v1h-1zM628 260h1v1h-1zM628 262h1v1h-1zM628 396h1v1h-1zM628 398h1v2h-1zM628 401h1v1h-1zM628 403h1v2h-1zM628 406h1v1h-1zM628 408h1v1h-1zM628 411h1v1h-1zM628 413h1v2h-1zM199 261h1v1h-1zM197 262h1v1h-1zM195 263h1v1h-1zM195 441h1v1h-1zM195 445h1v1h-1zM195 449h1v1h-1zM193 265h1v1h-1zM191 266h1v1h-1zM191 439h1v1h-1zM191 441h1v1h-1zM191 445h1v1h-1zM189 267h1v1h-1zM187 268h1v1h-1zM185 270h1v1h-1zM185 445h1v1h-1zM185 449h1v1h-1zM185 451h1v1h-1zM183 271h1v1h-1zM181 272h1v1h-1zM181 441h1v1h-1zM181 445h1v1h-1zM181 449h1v1h-1zM179 273h1v1h-1zM177 274h1v1h-1zM175 276h1v1h-1zM173 277h1v1h-1zM171 278h1v1h-1zM169 279h1v1h-1zM167 281h1v1h-1zM165 282h1v1h-1zM165 436h1v3h-1zM163 283h1v1h-1zM161 284h1v1h-1zM161 436h1v3h-1zM159 286h1v1h-1zM159 434h1v1h-1zM159 440h1v1h-1zM157 287h1v1h-1zM155 288h1v1h-1zM631 297h1v1h-1zM631 303h1v1h-1zM631 329h1v3h-1zM631 396h1v1h-1zM631 398h1v1h-1zM631 406h1v3h-1zM624 300h9v1h-9zM626 326h3v1h-3zM626 334h3v1h-3zM629 327h2v1h-2zM629 333h2v1h-2zM624 397h2v1h-2zM626 402h5v1h-5zM626 412h5v1h-5zM218 411h3v1h-3zM218 419h3v1h-3zM221 412h2v1h-2zM221 418h2v1h-2zM218 413h1v1h-1zM218 417h1v1h-1zM222 413h1v1h-1zM222 417h1v1h-1zM160 433h3v1h-3zM160 441h3v1h-3zM163 434h2v1h-2zM163 440h2v1h-2zM160 435h1v1h-1zM160 439h1v1h-1zM164 435h1v1h-1zM164 439h1v1h-1zM186 438h5v1h-5zM186 452h5v1h-5zM183 439h3v1h-3zM182 440h1v1h-1zM192 440h3v1h-3zM192 446h3v1h-3zM180 442h1v1h-1zM180 446h1v3h-1zM190 442h1v3h-1zM196 442h1v3h-1zM196 448h1v1h-1zM182 444h3v1h-3zM182 450h3v1h-3zM186 446h1v3h-1zM194 450h1v1h-1zM191 451h3v1h-3z"/><path fill="#ffff00" d="M284 25h1v1h-1zM284 27h1v7h-1zM290 25h1v2h-1zM294 25h3v1h-3zM283 26h2v1h-2zM293 26h1v1h-1zM293 29h1v1h-1zM297 26h1v2h-1zM297 30h1v1h-1zM297 33h1v1h-1zM297 40h1v1h-1zM282 27h1v1h-1zM291 27h2v1h-2zM289 28h1v1h-1zM292 28h1v1h-1zM298 28h1v2h-1zM298 34h1v6h-1zM288 29h1v5h-1zM294 30h1v1h-1zM295 31h2v1h-2zM296 32h1v1h-1zM296 41h1v1h-1zM285 34h1v1h-1zM287 34h1v1h-1zM286 35h1v5h-1zM315 37h1v1h-1zM315 39h1v2h-1zM315 42h1v3h-1zM313 38h5v1h-5zM317 40h2v1h-2zM315 41h2v1h-2zM319 41h1v2h-1zM319 45h1v1h-1zM318 43h1v2h-1zM257 59h1v1h-1zM257 61h1v2h-1zM257 64h1v3h-1zM255 60h5v1h-5zM259 62h2v1h-2zM257 63h2v1h-2zM261 63h1v2h-1zM261 67h1v1h-1zM260 65h1v2h-1zM111 140h1v2h-1zM111 143h1v5h-1zM111 149h1v6h-1zM107 142h9v1h-9zM267 145h1v1h-1zM115 146h3v1h-3zM114 147h1v1h-1zM118 147h1v1h-1zM118 151h1v1h-1zM118 155h1v1h-1zM111 148h3v1h-3zM119 148h1v3h-1zM119 156h1v1h-1zM117 152h1v3h-1zM137 157h1v2h-1zM137 160h1v5h-1zM137 166h1v6h-1zM133 159h9v1h-9zM141 163h3v1h-3zM128 164h1v1h-1zM128 166h1v1h-1zM140 164h1v1h-1zM144 164h1v1h-1zM144 168h1v1h-1zM144 172h1v1h-1zM127 165h3v1h-3zM137 165h3v1h-3zM145 165h1v3h-1zM145 173h1v1h-1zM143 169h1v3h-1zM308 170h1v1h-1zM383 178h5v1h-5zM383 185h5v1h-5zM382 179h1v1h-1zM382 184h1v1h-1zM388 179h1v1h-1zM388 184h1v1h-1zM388 378h1v1h-1zM381 180h1v4h-1zM389 180h1v4h-1zM389 379h1v1h-1zM154 181h1v1h-1zM154 183h1v1h-1zM153 182h3v1h-3zM321 186h1v1h-1zM385 186h1v4h-1zM385 191h1v4h-1zM385 379h1v1h-1zM363 187h1v1h-1zM363 189h1v1h-1zM362 188h3v1h-3zM354 190h5v1h-5zM354 197h5v1h-5zM381 190h9v1h-9zM353 191h1v1h-1zM353 196h1v1h-1zM359 191h1v1h-1zM359 196h1v1h-1zM352 192h1v4h-1zM360 192h1v4h-1zM624 196h1v1h-1zM624 204h1v1h-1zM624 236h1v1h-1zM631 196h1v1h-1zM631 204h1v1h-1zM631 237h1v1h-1zM631 239h1v4h-1zM631 244h1v1h-1zM631 280h1v1h-1zM631 284h1v1h-1zM631 380h1v2h-1zM631 384h1v1h-1zM625 197h6v1h-6zM625 203h6v1h-6zM328 198h1v1h-1zM356 198h1v4h-1zM356 203h1v4h-1zM626 198h1v5h-1zM626 236h1v1h-1zM626 281h1v3h-1zM626 347h1v3h-1zM629 198h1v5h-1zM629 237h1v1h-1zM629 239h1v4h-1zM629 244h1v1h-1zM629 278h1v1h-1zM334 199h1v1h-1zM334 201h1v1h-1zM333 200h3v1h-3zM330 202h1v1h-1zM352 202h9v1h-9zM414 210h3v1h-3zM414 214h3v1h-3zM413 211h1v3h-1zM417 211h1v3h-1zM415 215h1v1h-1zM415 217h1v2h-1zM413 216h5v1h-5zM628 236h1v1h-1zM628 276h1v1h-1zM628 351h1v1h-1zM628 353h1v2h-1zM625 237h1v7h-1zM625 276h1v1h-1zM625 278h1v3h-1zM627 237h1v7h-1zM627 278h1v3h-1zM627 376h1v1h-1zM627 378h1v2h-1zM627 381h1v3h-1zM629 238h3v1h-3zM630 243h1v1h-1zM630 347h1v3h-1zM630 382h1v2h-1zM28 266h3v1h-3zM28 270h3v1h-3zM27 267h1v3h-1zM31 267h1v3h-1zM29 271h1v1h-1zM29 273h1v2h-1zM29 289h1v1h-1zM29 297h1v5h-1zM27 272h5v1h-5zM630 276h2v1h-2zM630 279h2v1h-2zM624 277h2v1h-2zM628 277h2v1h-2zM632 277h1v2h-1zM632 281h1v3h-1zM41 289h1v1h-1zM41 297h1v5h-1zM30 290h1v2h-1zM30 295h1v2h-1zM30 302h1v2h-1zM40 290h1v2h-1zM40 295h1v2h-1zM40 302h1v2h-1zM31 292h2v1h-2zM31 294h2v1h-2zM31 304h2v1h-2zM38 292h2v1h-2zM38 294h2v1h-2zM38 304h2v1h-2zM33 293h5v1h-5zM33 305h5v1h-5zM436 312h3v1h-3zM436 316h3v1h-3zM435 313h1v3h-1zM439 313h1v3h-1zM437 317h1v1h-1zM437 319h1v2h-1zM435 318h5v1h-5zM99 345h3v1h-3zM99 349h3v1h-3zM98 346h1v3h-1zM102 346h1v3h-1zM627 346h3v1h-3zM627 350h3v1h-3zM100 350h1v1h-1zM100 352h1v2h-1zM98 351h5v1h-5zM626 352h5v1h-5zM625 377h5v1h-5zM384 378h1v1h-1zM392 378h1v1h-1zM387 379h1v1h-1zM391 379h1v1h-1zM393 379h1v1h-1zM629 379h2v1h-2zM386 380h1v13h-1zM390 380h1v13h-1zM394 380h1v3h-1zM394 384h1v7h-1zM394 394h1v1h-1zM398 380h1v1h-1zM398 382h1v9h-1zM398 394h1v1h-1zM627 380h2v1h-2zM397 381h2v1h-2zM396 382h1v1h-1zM396 392h1v1h-1zM394 383h3v1h-3zM395 391h1v1h-1zM395 393h1v1h-1zM397 391h1v1h-1zM397 393h1v1h-1z"/><path fill="#ff0000" d="M390 78h5v1h-5zM325 79h1v1h-1zM325 182h1v1h-1zM325 184h1v1h-1zM393 79h2v1h-2zM319 80h2v1h-2zM324 80h1v6h-1zM324 87h1v1h-1zM392 80h1v1h-1zM394 80h1v3h-1zM321 81h1v2h-1zM321 150h1v1h-1zM321 158h1v1h-1zM391 81h1v1h-1zM390 82h1v1h-1zM320 83h1v2h-1zM320 151h1v1h-1zM320 157h1v1h-1zM389 83h1v1h-1zM380 84h1v1h-1zM380 92h1v1h-1zM388 84h1v1h-1zM388 92h1v1h-1zM319 85h1v1h-1zM319 152h1v5h-1zM381 85h1v1h-1zM381 91h1v1h-1zM387 85h1v1h-1zM387 91h1v1h-1zM319 86h8v1h-8zM382 86h1v1h-1zM382 90h1v1h-1zM386 86h1v1h-1zM386 90h1v1h-1zM383 87h1v1h-1zM383 89h1v1h-1zM385 87h1v1h-1zM385 89h1v1h-1zM384 88h1v1h-1zM379 93h1v1h-1zM378 94h1v1h-1zM407 103h1v1h-1zM401 104h2v1h-2zM406 104h1v6h-1zM406 111h1v1h-1zM403 105h1v2h-1zM402 107h1v2h-1zM401 109h1v1h-1zM401 110h8v1h-8zM352 121h6v1h-6zM356 122h2v1h-2zM355 123h1v1h-1zM357 123h1v4h-1zM354 124h1v1h-1zM353 125h1v1h-1zM352 126h1v1h-1zM344 127h5v1h-5zM344 137h5v1h-5zM351 127h1v1h-1zM351 130h1v5h-1zM351 165h1v1h-1zM351 167h1v1h-1zM343 128h1v1h-1zM343 136h1v1h-1zM349 128h2v1h-2zM342 129h1v1h-1zM342 135h1v1h-1zM350 129h1v1h-1zM350 135h1v1h-1zM341 130h1v5h-1zM349 136h1v1h-1zM364 141h5v1h-5zM364 157h5v1h-5zM362 142h2v1h-2zM362 156h2v1h-2zM369 142h2v1h-2zM369 156h2v1h-2zM330 143h6v1h-6zM361 143h1v1h-1zM361 155h1v1h-1zM371 143h1v1h-1zM371 155h1v1h-1zM332 144h4v1h-4zM360 144h1v1h-1zM360 154h1v1h-1zM372 144h1v1h-1zM372 154h1v1h-1zM333 145h1v1h-1zM333 161h1v1h-1zM333 171h1v1h-1zM335 145h1v4h-1zM359 145h1v2h-1zM359 152h1v2h-1zM373 145h1v2h-1zM373 152h1v2h-1zM332 146h1v1h-1zM332 162h1v2h-1zM332 169h1v2h-1zM331 147h1v1h-1zM331 164h1v5h-1zM358 147h1v5h-1zM374 147h1v5h-1zM330 148h1v1h-1zM322 149h5v1h-5zM322 159h5v1h-5zM329 149h1v1h-1zM329 152h1v5h-1zM366 149h1v1h-1zM327 150h2v1h-2zM328 151h1v1h-1zM328 157h1v1h-1zM43 158h3v1h-3zM327 158h1v1h-1zM337 158h5v1h-5zM337 174h5v1h-5zM44 159h2v1h-2zM335 159h2v1h-2zM335 173h2v1h-2zM342 159h2v1h-2zM342 173h2v1h-2zM43 160h1v1h-1zM45 160h1v1h-1zM334 160h1v1h-1zM334 172h1v1h-1zM344 160h1v1h-1zM344 172h1v1h-1zM39 161h2v1h-2zM39 166h2v1h-2zM42 161h1v1h-1zM42 163h1v2h-1zM345 161h1v1h-1zM345 171h1v1h-1zM38 162h1v1h-1zM38 165h1v1h-1zM41 162h1v1h-1zM41 165h1v1h-1zM41 182h1v3h-1zM346 162h1v2h-1zM346 169h1v2h-1zM37 163h1v2h-1zM347 164h1v5h-1zM311 165h1v1h-1zM311 167h1v1h-1zM310 166h3v1h-3zM339 166h1v1h-1zM350 166h3v1h-3zM27 180h3v1h-3zM37 180h3v1h-3zM26 181h1v1h-1zM26 185h1v1h-1zM30 181h1v1h-1zM36 181h1v1h-1zM40 181h1v1h-1zM40 185h1v1h-1zM25 182h1v3h-1zM31 182h1v3h-1zM35 182h1v3h-1zM324 183h3v1h-3zM32 185h1v4h-1zM34 185h1v4h-1zM27 186h1v1h-1zM39 186h1v1h-1zM625 186h2v1h-2zM625 317h2v1h-2zM625 323h2v1h-2zM631 186h2v1h-2zM631 267h2v1h-2zM631 357h2v1h-2zM624 187h1v2h-1zM624 232h1v1h-1zM624 274h1v1h-1zM624 319h1v3h-1zM624 361h1v2h-1zM624 372h1v1h-1zM627 187h1v3h-1zM627 271h1v1h-1zM629 187h1v3h-1zM629 269h1v1h-1zM629 273h1v1h-1zM629 359h1v1h-1zM629 361h1v2h-1zM629 367h1v6h-1zM629 374h1v1h-1zM632 187h1v2h-1zM632 234h1v1h-1zM632 268h1v1h-1zM632 319h1v3h-1zM632 358h1v1h-1zM33 189h1v8h-1zM625 189h1v1h-1zM625 228h1v3h-1zM625 233h1v1h-1zM625 269h1v1h-1zM625 273h1v1h-1zM625 318h1v1h-1zM625 322h1v1h-1zM625 360h1v1h-1zM625 363h1v1h-1zM625 370h1v2h-1zM631 189h1v1h-1zM631 228h1v2h-1zM631 233h1v1h-1zM631 318h1v1h-1zM631 322h1v1h-1zM628 190h1v5h-1zM628 270h1v1h-1zM628 272h1v1h-1zM628 320h1v1h-1zM628 360h1v1h-1zM628 363h1v1h-1zM627 226h3v1h-3zM627 316h3v1h-3zM627 324h3v1h-3zM626 227h1v1h-1zM626 231h1v2h-1zM626 270h1v1h-1zM626 272h1v1h-1zM626 368h1v2h-1zM630 227h1v1h-1zM630 230h1v3h-1zM630 268h1v1h-1zM630 358h1v1h-1zM630 366h1v1h-1zM65 260h3v1h-3zM66 261h2v1h-2zM65 262h1v1h-1zM67 262h1v1h-1zM61 263h2v1h-2zM61 268h2v1h-2zM64 263h1v1h-1zM64 265h1v2h-1zM60 264h1v1h-1zM60 267h1v1h-1zM63 264h1v1h-1zM63 267h1v1h-1zM59 265h1v2h-1zM630 266h3v1h-3zM630 356h3v1h-3zM630 317h2v1h-2zM630 323h2v1h-2zM232 341h1v1h-1zM232 343h1v1h-1zM231 342h3v1h-3zM237 355h1v1h-1zM236 356h1v1h-1zM226 357h2v1h-2zM235 357h1v12h-1zM235 370h1v2h-1zM235 386h1v1h-1zM228 358h1v1h-1zM228 362h1v2h-1zM229 359h1v3h-1zM626 359h2v1h-2zM626 364h2v1h-2zM227 364h1v2h-1zM227 390h1v3h-1zM226 366h1v2h-1zM226 389h1v1h-1zM226 393h1v2h-1zM624 367h2v1h-2zM225 368h1v1h-1zM225 395h1v2h-1zM225 369h15v1h-15zM230 372h1v1h-1zM230 374h1v1h-1zM229 373h3v1h-3zM624 373h8v1h-8zM234 387h1v1h-1zM224 388h2v1h-2zM233 388h1v12h-1zM233 401h1v2h-1zM224 397h1v2h-1zM223 399h1v1h-1zM223 400h15v1h-15zM298 402h3v1h-3zM298 410h3v1h-3zM296 403h2v1h-2zM296 409h2v1h-2zM301 403h2v1h-2zM301 409h2v1h-2zM296 404h1v1h-1zM296 408h1v1h-1zM302 404h1v1h-1zM302 408h1v1h-1zM302 438h1v1h-1zM302 444h1v1h-1zM302 448h1v1h-1zM295 405h1v3h-1zM303 405h1v3h-1zM303 439h1v5h-1zM303 449h1v1h-1zM299 406h1v1h-1zM295 435h5v1h-5zM294 436h1v1h-1zM300 436h1v1h-1zM293 437h1v1h-1zM293 445h1v3h-1zM301 437h1v1h-1zM301 445h1v3h-1zM292 438h1v1h-1zM292 444h1v1h-1zM292 448h1v1h-1zM291 439h1v5h-1zM291 449h1v1h-1zM269 445h3v1h-3zM269 453h3v1h-3zM267 446h2v1h-2zM267 452h2v1h-2zM272 446h2v1h-2zM272 452h2v1h-2zM267 447h1v1h-1zM267 451h1v1h-1zM273 447h1v1h-1zM273 451h1v1h-1zM289 447h1v1h-1zM266 448h1v3h-1zM274 448h1v3h-1zM290 448h1v1h-1zM270 449h1v1h-1zM304 450h1v1h-1zM305 451h1v1h-1z"/>
</svg>
<svg width="0" height="0" style="position:absolute"><filter id="crisp" x="0" y="0" width="100%" height="100%" color-interpolation-filters="sRGB"><feComponentTransfer><feFuncA type="discrete" tableValues="0 1"/></feComponentTransfer></filter></svg>
<div class="t">
<div class="l" style="top:7px"><span style="color:#ffffff">Astrolog&#160;5.41G</span></div><div class="l" style="top:17px"><span style="color:#c0c0c0">Inner&#160;ring:</span></div><div class="l" style="top:27px"><span style="color:#c0c0c0">Chart&#160;of&#160;the&#160;Moment</span></div><div class="l" style="top:37px"><span style="color:#ffffff">Sun&#160;November&#160;23,&#160;2025</span></div><div class="l" style="top:47px"><span style="color:#ffffff">&#160;3:10:00pm&#160;(ST&#160;-8:00&#160;GMT)</span></div><div class="l" style="top:57px"><span style="color:#c0c0c0">San&#160;Francisco,&#160;CA</span></div><div class="l" style="top:67px"><span style="color:#c0c0c0">122°42’00&quot;W&#160;37°78’00&quot;N</span></div><div class="l" style="top:77px"><span style="color:#c0c0c0">Outer&#160;ring&#160;-&#160;Transit:</span></div><div class="l" style="top:87px"><span style="color:#ffff00">Mon&#160;November&#160;24,&#160;2025</span></div><div class="l" style="top:97px"><span style="color:#ffff00">&#160;1:10:18am&#160;(ST&#160;+2:00&#160;GMT)</span></div><div class="l" style="top:107px"><span style="color:#c0c0c0">&#160;26°43’00&quot;E&#160;58°23’00&quot;N</span></div><div class="l" style="top:117px"><span style="color:#c0c0c0">Placidus&#160;houses.</span></div><div class="l" style="top:127px"><span style="color:#c0c0c0">Tropical,&#160;Geocentric.</span></div><div class="l" style="top:137px"><span style="color:#ffff00">Julian&#160;Day&#160;=&#160;2461003.4655</span></div><div class="l" style="top:147px"><span style="color:#c0c0c0">Obliquity&#160;=&#160;23°26’09&quot;</span></div><div class="l" style="top:157px"><span style="color:#c0c0c0">Sidereal&#160;time:&#160;&#160;5:09:51</span></div><div class="l" style="top:167px"><span style="color:#c0c0c0">DeltaT&#160;=&#160;&#160;95.0905</span></div><div class="l" style="top:187px"><span style="color:#ff0000">&#160;1st&#160;house:&#160;</span><span style="color:#ff0000">28Ari55</span></div><div class="l" style="top:197px"><span style="color:#ffff00">&#160;2nd&#160;house:&#160;</span><span style="color:#00ff00">&#160;1Gem31</span></div><div class="l" style="top:207px"><span style="color:#00ff00">&#160;3rd&#160;house:&#160;</span><span style="color:#00ff00">25Gem03</span></div><div class="l" style="top:217px"><span style="color:#0000ff">&#160;4th&#160;house:&#160;</span><span style="color:#0000ff">16Can34</span></div><div class="l" style="top:227px"><span style="color:#ff0000">&#160;5th&#160;house:&#160;</span><span style="color:#ff0000">10Leo42</span></div><div class="l" style="top:237px"><span style="color:#ffff00">&#160;6th&#160;house:&#160;</span><span style="color:#ffff00">13Vir09</span></div><div class="l" style="top:247px"><span style="color:#00ff00">&#160;7th&#160;house:&#160;</span><span style="color:#00ff00">28Lib55</span></div><div class="l" style="top:257px"><span style="color:#0000ff">&#160;8th&#160;house:&#160;</span><span style="color:#ff0000">&#160;1Sag31</span></div><div class="l" style="top:267px"><span style="color:#ff0000">&#160;9th&#160;house:&#160;</span><span style="color:#ff0000">25Sag03</span></div><div class="l" style="top:277px"><span style="color:#ffff00">10th&#160;house:&#160;</span><span style="color:#ffff00">16Cap34</span></div><div class="l" style="top:287px"><span style="color:#00ff00">11th&#160;house:&#160;</span><span style="color:#00ff00">10Aqu42</span></div><div class="l" style="top:297px"><span style="color:#0000ff">12th&#160;house:&#160;</span><span style="color:#0000ff">13Pis09</span></div><div class="l" style="top:317px"><span style="color:#ff0000">&#160;Sun:&#160;</span><span style="color:#ff0000">&#160;1Sag55</span><span style="color:#ffffff">&#160;</span><span style="color:#c0c0c0">&#160;-&#160;0°00’</span></div><div class="l" style="top:327px"><span style="color:#0000ff">Moon:&#160;</span><span style="color:#ffff00">12Cap11</span><span style="color:#ffffff">&#160;</span><span style="color:#c0c0c0">&#160;-&#160;4°27’</span></div><div class="l" style="top:337px"><span style="color:#00ff00">Merc:&#160;</span><span style="color:#0000ff">23Sco50</span><span style="color:#ffffff">R</span><span style="color:#c0c0c0">&#160;+&#160;1°38’</span></div><div class="l" style="top:347px"><span style="color:#ffff00">Venu:&#160;</span><span style="color:#0000ff">21Sco21</span><span style="color:#ffffff">&#160;</span><span style="color:#c0c0c0">&#160;+&#160;0°57’</span></div><div class="l" style="top:357px"><span style="color:#ff0000">Mars:&#160;</span><span style="color:#ff0000">14Sag06</span><span style="color:#ffffff">&#160;</span><span style="color:#c0c0c0">&#160;-&#160;0°36’</span></div><div class="l" style="top:367px"><span style="color:#ff0000">Jupi:&#160;</span><span style="color:#0000ff">24Can54</span><span style="color:#ffffff">R</span><span style="color:#c0c0c0">&#160;+&#160;0°08’</span></div><div class="l" style="top:377px"><span style="color:#ffff00">Satu:&#160;</span><span style="color:#0000ff">25Pis10</span><span style="color:#ffffff">R</span><span style="color:#c0c0c0">&#160;-&#160;2°24’</span></div><div class="l" style="top:387px"><span style="color:#00ff00">Uran:&#160;</span><span style="color:#ffff00">29Tau21</span><span style="color:#ffffff">R</span><span style="color:#c0c0c0">&#160;-&#160;0°12’</span></div><div class="l" style="top:397px"><span style="color:#0000ff">Nept:&#160;</span><span style="color:#0000ff">29Pis27</span><span style="color:#ffffff">R</span><span style="color:#c0c0c0">&#160;-&#160;1°21’</span></div><div class="l" style="top:407px"><span style="color:#0000ff">Plut:&#160;</span><span style="color:#00ff00">&#160;1Aqu46</span><span style="color:#ffffff">&#160;</span><span style="color:#c0c0c0">&#160;-&#160;3°46’</span></div><div class="l" style="top:427px"><span style="color:#c0c0c0">Fire:&#160;2,&#160;Earth:&#160;2,</span></div><div class="l" style="top:437px"><span style="color:#c0c0c0">Air&#160;:&#160;1,&#160;Water:&#160;5</span></div><div class="l" style="top:447px"><span style="color:#c0c0c0">Car:&#160;2,&#160;Fix:&#160;4,&#160;Mut:&#160;4</span></div><div class="l" style="top:457px"><span style="color:#c0c0c0">Yang:&#160;3,&#160;Yin:&#160;7</span></div><div class="l" style="top:467px"><span style="color:#c0c0c0">M:&#160;8,&#160;N:&#160;2,&#160;A:&#160;4,&#160;D:&#160;6</span></div>
<div class="h" style="left:66px;top:283px;color:#ff0000">1</div><div class="h" style="left:109px;top:358px;color:#ffff00">2</div><div class="h" style="left:167px;top:397px;color:#00ff00">3</div><div class="h" style="left:236px;top:411px;color:#0000ff">4</div><div class="h" style="left:319px;top:391px;color:#ff0000">5</div><div class="h" style="left:399px;top:303px;color:#ffff00">6</div><div class="h" style="left:406px;top:185px;color:#00ff00">7</div><div class="h" style="left:363px;top:110px;color:#0000ff">8</div><div class="h" style="left:305px;top:71px;color:#ff0000">9</div><div class="h" style="left:232px;top:57px;color:#ffff00">10</div><div class="h" style="left:149px;top:77px;color:#00ff00">11</div><div class="h" style="left:69px;top:165px;color:#0000ff">12</div>
</div>
</body></html>
